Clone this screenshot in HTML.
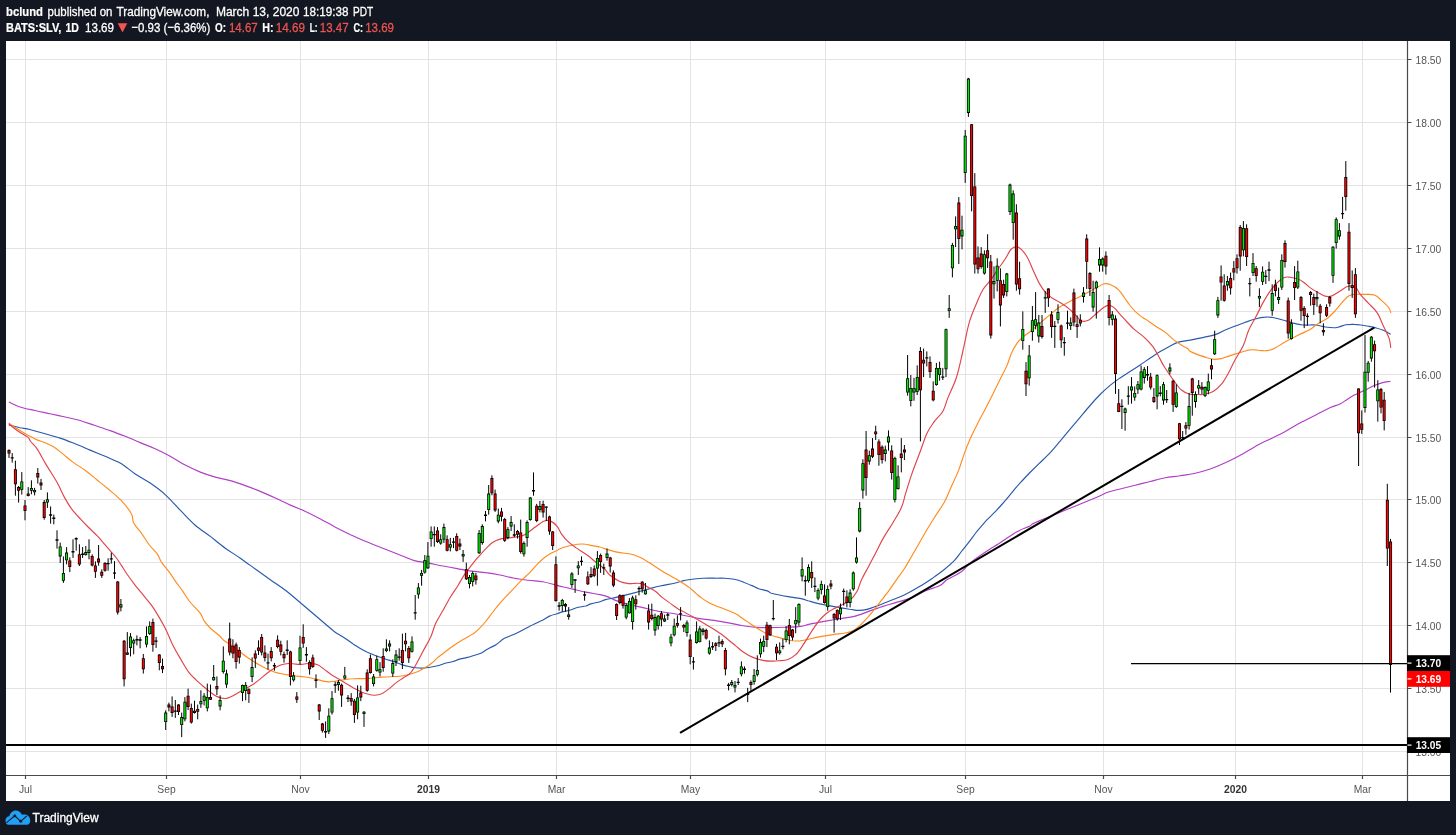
<!DOCTYPE html>
<html><head><meta charset="utf-8"><title>SLV chart</title>
<style>html,body{margin:0;padding:0;background:#131722;overflow:hidden}svg{display:block;will-change:transform}text{font-family:"Liberation Sans",sans-serif}</style></head><body>
<svg width="1456" height="835" viewBox="0 0 1456 835">
<rect width="1456" height="835" fill="#131722"/>
<rect x="6" y="41" width="1444" height="760" fill="#fff"/>
<path d="M25.5 41 V775.5 M166.5 41 V775.5 M300.5 41 V775.5 M428.5 41 V775.5 M556.5 41 V775.5 M690.5 41 V775.5 M825.5 41 V775.5 M965.5 41 V775.5 M1103.5 41 V775.5 M1235.5 41 V775.5 M1362.5 41 V775.5 M6 59.5 H1407.5 M6 122.5 H1407.5 M6 185.5 H1407.5 M6 248.5 H1407.5 M6 311.5 H1407.5 M6 374.5 H1407.5 M6 437.5 H1407.5 M6 499.5 H1407.5 M6 562.5 H1407.5 M6 625.5 H1407.5 M6 688.5 H1407.5 M6 751.5 H1407.5" stroke="#e3e3e3" stroke-width="1" fill="none"/>
<clipPath id="c"><rect x="6" y="41" width="1401.5" height="734.5"/></clipPath>
<g clip-path="url(#c)">
<path d="M8.8 402.0C10.6 402.8 15.6 405.6 20.0 407.0C24.4 408.4 30.0 409.4 35.0 410.5C40.1 411.7 45.1 412.7 50.1 413.8C55.1 414.9 60.1 415.9 65.1 417.0C70.1 418.2 75.1 419.1 80.1 420.5C85.1 422.0 90.1 423.9 95.1 425.5C100.1 427.2 105.1 428.8 110.1 430.6C115.1 432.3 120.2 434.3 125.2 436.3C130.2 438.3 135.2 440.5 140.2 442.6C145.2 444.7 150.2 446.5 155.2 448.8C160.2 451.1 165.2 453.6 170.2 456.3C175.2 459.0 180.2 462.5 185.2 465.1C190.2 467.7 195.2 470.1 200.3 472.1C205.3 474.1 210.3 475.7 215.3 477.1C220.3 478.5 225.3 479.2 230.3 480.6C235.3 482.0 240.3 483.8 245.3 485.6C250.3 487.4 255.3 489.3 260.3 491.4C265.3 493.5 270.3 495.8 275.3 498.1C280.4 500.4 285.4 502.9 290.4 505.1C295.4 507.4 300.4 509.1 305.4 511.4C310.4 513.7 315.4 516.3 320.4 518.9C325.4 521.5 330.4 524.5 335.4 527.2C340.4 529.8 345.7 532.4 350.4 534.7C355.2 536.9 355.7 537.3 364.0 540.7C372.2 544.1 392.8 552.1 400.0 555.0C407.2 557.9 404.8 556.9 407.1 557.9C409.5 558.8 410.7 559.7 414.3 560.6C417.9 561.5 423.8 562.2 428.6 563.1C433.3 564.0 438.1 565.1 442.9 566.0C447.6 566.9 452.4 567.7 457.1 568.6C461.9 569.4 466.7 570.5 471.4 571.1C476.2 571.8 481.0 571.9 485.7 572.6C490.5 573.2 495.2 574.0 500.0 575.0C504.8 576.0 509.5 577.4 514.3 578.3C519.0 579.2 523.8 579.7 528.6 580.3C533.3 580.9 538.1 580.9 542.9 581.7C547.6 582.6 552.4 584.2 557.1 585.4C561.9 586.6 566.7 587.7 571.4 588.9C576.2 590.0 581.0 591.2 585.7 592.1C590.5 593.1 596.3 593.8 600.0 594.6C603.7 595.4 605.6 596.0 608.0 596.9C610.4 597.8 610.9 598.7 614.3 599.9C617.7 601.2 623.8 603.0 628.6 604.3C633.3 605.6 638.1 606.5 642.9 607.6C647.6 608.7 652.4 610.0 657.1 611.0C661.9 612.0 666.7 612.5 671.4 613.3C676.2 614.1 681.0 614.8 685.7 615.7C690.5 616.6 695.2 617.8 700.0 618.6C704.8 619.4 709.5 619.7 714.3 620.4C719.0 621.1 723.8 622.0 728.6 622.9C733.3 623.7 738.1 625.0 742.9 625.7C747.6 626.5 752.4 627.1 757.1 627.4C761.9 627.7 766.7 627.6 771.4 627.6C776.2 627.5 780.8 627.5 785.7 627.3C790.6 627.1 796.7 627.0 800.7 626.4C804.7 625.9 805.5 625.0 809.7 624.1C813.9 623.3 820.7 622.1 825.7 621.1C830.8 620.2 835.2 619.4 840.0 618.6C844.8 617.8 849.5 617.6 854.3 616.4C859.0 615.2 863.8 613.1 868.6 611.4C873.3 609.8 878.1 608.0 882.9 606.4C887.6 604.9 892.4 603.6 897.1 602.1C901.9 600.7 906.7 599.8 911.4 597.9C916.2 596.0 921.0 592.8 925.7 590.7C930.5 588.7 936.4 587.4 940.0 585.5C943.6 583.7 943.6 581.9 947.1 579.6C950.7 577.4 957.9 574.3 961.4 571.8C965.0 569.3 966.2 566.6 968.6 564.5C971.0 562.3 973.3 560.5 975.7 558.8C978.1 557.0 980.5 555.4 982.9 553.8C985.2 552.1 987.3 550.8 990.0 549.1C992.7 547.4 995.9 545.6 999.0 543.6C1002.1 541.5 1005.3 539.1 1008.6 537.0C1011.8 534.9 1015.0 532.7 1018.6 530.9C1022.1 529.0 1026.8 527.5 1030.0 525.9C1033.2 524.3 1027.4 526.0 1038.0 521.4C1048.6 516.9 1082.2 503.4 1093.8 498.5C1105.4 493.6 1103.2 493.8 1107.6 492.3C1112.0 490.7 1115.5 490.2 1120.1 489.0C1124.7 487.8 1130.1 486.5 1135.1 485.2C1140.2 484.0 1145.2 482.7 1150.2 481.5C1155.2 480.2 1160.2 478.7 1165.2 477.7C1170.2 476.8 1175.2 476.5 1180.2 475.7C1185.2 475.0 1190.2 474.4 1195.2 473.2C1200.2 472.1 1205.2 470.7 1210.2 469.0C1215.2 467.2 1220.3 465.0 1225.3 462.7C1230.3 460.4 1235.3 457.9 1240.3 455.2C1245.3 452.5 1250.3 449.2 1255.3 446.4C1260.3 443.7 1265.3 441.4 1270.3 438.9C1275.3 436.4 1280.3 434.1 1285.3 431.4C1290.3 428.7 1295.3 425.4 1300.4 422.7C1305.4 420.0 1310.4 417.7 1315.4 415.2C1320.4 412.7 1326.3 409.5 1330.4 407.6C1334.5 405.8 1337.2 405.4 1340.0 404.0C1342.8 402.7 1344.7 400.9 1347.1 399.4C1349.5 397.9 1351.9 396.4 1354.2 395.1C1356.6 393.9 1359.0 392.9 1361.4 391.7C1363.7 390.6 1366.1 389.5 1368.5 388.4C1370.9 387.2 1373.2 386.0 1375.6 385.0C1378.0 384.1 1380.2 383.3 1382.7 382.6C1385.2 382.0 1389.3 381.5 1390.6 381.2" stroke="#b03fc6" stroke-width="1.15" fill="none" stroke-linejoin="round"/>
<path d="M8.8 425.0C10.6 425.5 16.5 426.9 20.0 427.7C23.6 428.4 25.9 428.5 30.0 429.5C34.2 430.6 40.1 432.4 45.1 433.8C50.1 435.2 55.1 436.4 60.1 438.1C65.1 439.7 70.1 441.8 75.1 443.8C80.1 445.8 85.1 448.0 90.1 450.1C95.1 452.2 100.1 454.2 105.1 456.3C110.1 458.5 115.1 460.2 120.2 463.1C125.2 466.0 130.2 470.5 135.2 473.9C140.2 477.2 145.2 479.7 150.2 483.1C155.2 486.6 160.2 490.1 165.2 494.6C170.2 499.1 175.2 505.1 180.2 510.2C185.2 515.2 190.2 520.8 195.2 525.2C200.3 529.5 205.3 532.6 210.3 536.4C215.3 540.3 220.3 544.6 225.3 548.2C230.3 551.8 235.3 554.7 240.3 558.2C245.3 561.7 250.3 565.4 255.3 569.0C260.3 572.6 265.3 576.2 270.3 579.7C275.3 583.3 281.2 587.1 285.4 590.3C289.5 593.4 287.5 591.9 295.4 598.5C303.2 605.1 325.2 624.0 332.4 630.0C339.7 636.0 336.6 632.9 338.9 634.4C341.1 635.9 343.6 637.4 346.0 639.0C348.4 640.6 350.8 642.3 353.1 643.9C355.5 645.4 357.9 647.0 360.3 648.4C362.7 649.8 365.0 651.1 367.4 652.3C369.8 653.4 372.2 654.4 374.6 655.3C377.0 656.2 379.3 657.0 381.7 657.8C384.1 658.6 386.5 659.3 388.9 660.1C391.2 660.9 393.9 661.7 396.0 662.4C398.1 663.2 399.5 663.9 401.6 664.6C403.7 665.3 406.3 666.0 408.7 666.5C411.1 667.1 413.2 667.6 415.9 667.8C418.5 668.1 422.2 668.1 424.6 668.0C427.0 667.9 427.8 667.6 430.1 667.2C432.5 666.8 436.5 666.1 438.9 665.5C441.2 664.9 442.0 664.2 444.4 663.5C446.8 662.8 450.8 662.2 453.1 661.5C455.5 660.8 456.3 660.1 458.7 659.4C461.1 658.7 465.0 658.1 467.4 657.4C469.8 656.8 470.8 656.4 473.0 655.7C475.2 655.0 478.5 654.4 480.9 653.3C483.2 652.2 484.8 650.6 487.3 649.2C489.8 647.7 493.9 646.0 496.0 644.7C498.1 643.5 498.7 642.7 500.0 641.6C501.3 640.6 501.6 639.6 504.0 638.4C506.4 637.2 510.2 636.2 514.3 634.3C518.4 632.4 523.8 629.2 528.6 626.9C533.3 624.5 539.3 621.9 542.9 620.1C546.4 618.2 547.6 616.9 550.0 615.9C552.4 614.8 555.1 614.3 557.1 613.7C559.2 613.0 559.8 612.6 562.1 611.9C564.5 611.3 569.0 610.5 571.4 609.8C573.8 609.1 574.0 608.4 576.4 607.8C578.8 607.1 583.3 606.6 585.7 606.0C588.1 605.3 588.3 604.6 590.7 603.9C593.1 603.2 597.5 602.4 600.0 601.7C602.5 601.0 602.6 600.4 605.4 599.6C608.3 598.9 612.8 598.2 617.1 597.1C621.5 596.1 626.7 594.8 631.4 593.6C636.2 592.3 641.0 591.0 645.7 589.7C650.5 588.5 655.2 587.1 660.0 586.0C664.8 584.9 670.7 584.0 674.3 583.2C677.9 582.4 679.0 581.8 681.4 581.2C683.8 580.6 685.0 580.2 688.6 579.7C692.1 579.2 698.1 578.5 702.9 578.3C707.6 578.0 713.5 578.2 717.1 578.2C720.8 578.2 721.8 578.0 724.6 578.2C727.5 578.4 731.2 578.7 734.3 579.3C737.3 579.9 740.0 580.9 742.9 581.9C745.7 583.0 748.8 584.2 751.4 585.4C754.0 586.5 755.8 587.7 758.6 588.7C761.3 589.6 765.9 590.3 768.0 591.1C770.1 591.8 768.1 592.2 771.4 593.2C774.7 594.1 782.7 595.7 787.9 596.6C793.0 597.6 798.8 598.2 802.1 598.9C805.5 599.6 805.3 600.0 808.0 600.8C810.7 601.5 814.4 602.6 818.6 603.6C822.7 604.5 827.6 605.5 832.9 606.4C838.1 607.4 845.7 608.6 850.0 609.3C854.3 609.9 855.7 610.4 858.6 610.4C861.4 610.4 864.3 610.1 867.1 609.4C870.0 608.7 871.9 607.9 875.7 606.4C879.5 605.0 885.2 602.6 890.0 600.7C894.8 598.8 899.5 597.3 904.3 595.0C909.0 592.7 913.8 590.0 918.6 587.1C923.3 584.3 928.6 580.8 932.9 577.9C937.1 574.9 940.7 572.3 944.3 569.5C947.9 566.6 951.4 563.7 954.3 560.7C957.1 557.7 958.9 554.7 961.4 551.5C963.9 548.3 966.9 544.7 969.3 541.6C971.7 538.5 973.7 535.5 975.7 533.0C977.7 530.4 979.5 528.3 981.4 526.1C983.3 523.9 985.0 521.9 987.1 519.6C989.3 517.4 991.9 515.1 994.3 512.7C996.7 510.2 999.0 507.7 1001.4 505.0C1003.8 502.3 1006.2 499.5 1008.6 496.6C1011.0 493.8 1013.3 490.6 1015.7 487.9C1018.1 485.1 1020.5 482.6 1022.9 480.0C1025.2 477.4 1027.3 475.3 1030.0 472.5C1032.7 469.8 1035.7 466.9 1039.0 463.6C1042.4 460.3 1046.5 456.6 1050.0 452.8C1053.5 449.1 1056.7 445.1 1060.1 441.1C1063.4 437.2 1066.7 433.2 1070.1 429.2C1073.4 425.3 1076.7 421.3 1080.1 417.3C1083.4 413.4 1086.8 409.3 1090.1 405.5C1093.4 401.6 1096.8 397.8 1100.1 394.5C1103.4 391.2 1106.8 388.2 1110.1 385.4C1113.5 382.7 1116.8 380.3 1120.1 377.9C1123.5 375.6 1126.8 373.5 1130.1 371.4C1133.5 369.2 1136.8 367.1 1140.2 364.9C1143.5 362.7 1146.8 360.4 1150.2 358.1C1153.5 355.9 1156.8 353.6 1160.2 351.6C1163.5 349.6 1167.3 347.7 1170.2 346.1C1173.1 344.6 1174.4 343.5 1177.7 342.4C1181.0 341.4 1186.0 340.9 1190.2 340.1C1194.4 339.2 1198.6 338.5 1202.7 337.6C1206.9 336.6 1211.5 335.8 1215.2 334.6C1219.0 333.3 1221.9 331.4 1225.3 330.0C1228.6 328.6 1231.9 327.3 1235.3 326.0C1238.6 324.8 1241.9 323.5 1245.3 322.3C1248.6 321.1 1252.0 319.8 1255.3 319.0C1258.6 318.1 1262.4 317.3 1265.3 317.1C1268.2 316.8 1269.9 317.0 1272.8 317.5C1275.7 318.0 1279.5 319.0 1282.8 320.0C1286.2 320.9 1289.5 322.2 1292.8 323.0C1296.2 323.9 1299.1 324.7 1302.9 325.0C1306.6 325.4 1311.6 324.7 1315.4 325.0C1319.1 325.4 1322.0 326.6 1325.4 327.0C1328.7 327.5 1333.0 327.8 1335.4 327.7C1337.8 327.6 1338.3 327.1 1340.0 326.6C1341.7 326.2 1343.3 325.2 1345.7 324.8C1348.1 324.5 1351.4 324.3 1354.2 324.4C1357.1 324.4 1360.4 325.0 1362.8 325.3C1365.2 325.6 1366.6 325.9 1368.5 326.3C1370.4 326.6 1371.8 326.8 1374.2 327.4C1376.6 328.1 1380.0 328.9 1382.7 330.0C1385.5 331.2 1389.3 333.5 1390.6 334.2" stroke="#2859ad" stroke-width="1.15" fill="none" stroke-linejoin="round"/>
<path d="M8.8 423.0C10.2 424.0 14.4 427.1 17.5 429.0C20.7 431.0 24.4 433.2 27.5 435.0C30.7 436.7 33.4 438.3 36.4 439.6C39.5 440.9 42.7 441.7 45.7 443.0C48.7 444.3 51.4 445.5 54.3 447.3C57.1 449.1 59.8 451.5 62.9 453.9C66.0 456.4 69.0 459.3 72.9 462.1C76.7 464.9 81.7 467.7 85.7 470.7C89.8 473.7 93.3 476.9 97.1 480.0C101.0 483.1 104.5 485.8 108.6 489.3C112.6 492.7 117.6 496.6 121.4 500.7C125.2 504.8 129.4 510.1 131.4 513.8C133.5 517.4 131.9 519.4 133.6 522.7C135.2 525.9 138.8 529.4 141.4 533.1C144.0 536.8 146.6 541.4 149.3 545.0C152.0 548.5 155.5 551.4 157.5 554.3C159.5 557.2 159.6 559.3 161.4 562.1C163.3 564.9 166.2 568.0 168.6 571.2C171.0 574.5 173.3 578.2 175.7 581.6C178.1 585.0 180.5 588.0 182.9 591.4C185.2 594.8 187.1 598.4 190.0 602.0C192.9 605.5 197.6 609.7 200.0 612.9C202.4 616.0 202.5 618.5 204.3 621.1C206.1 623.7 208.2 626.0 210.7 628.5C213.3 630.9 217.3 633.7 219.5 635.7C221.8 637.8 222.3 639.2 224.3 640.8C226.3 642.4 229.0 643.7 231.4 645.4C233.8 647.0 236.2 648.9 238.6 650.7C241.0 652.5 243.3 654.5 245.7 656.2C248.1 657.9 250.5 659.5 252.9 661.0C255.2 662.6 257.6 664.0 260.0 665.3C262.4 666.7 264.8 667.9 267.1 669.0C269.5 670.1 271.9 671.2 274.3 672.0C276.7 672.8 279.0 673.3 281.4 673.8C283.8 674.3 285.9 674.6 288.6 675.0C291.2 675.4 294.7 675.8 297.2 676.1C299.8 676.4 301.6 676.5 303.7 676.8C305.9 677.1 307.8 677.4 310.1 677.8C312.5 678.3 315.3 679.0 317.7 679.6C320.1 680.2 322.5 681.1 324.6 681.4C326.7 681.8 327.9 681.9 330.3 681.8C332.7 681.7 336.2 681.0 338.9 680.6C341.5 680.2 343.6 679.7 346.0 679.4C348.4 679.0 349.6 678.9 353.1 678.8C356.7 678.6 362.7 678.8 367.4 678.6C372.2 678.3 377.0 677.5 381.7 677.1C386.5 676.8 392.4 676.7 396.0 676.5C399.6 676.3 400.8 676.1 403.1 675.7C405.5 675.3 407.9 674.8 410.3 674.2C412.7 673.5 415.1 672.8 417.4 671.8C419.8 670.8 422.0 669.6 424.4 668.1C426.8 666.7 429.6 664.9 431.7 663.2C433.9 661.5 435.2 659.7 437.3 657.9C439.4 656.2 442.0 654.3 444.4 652.5C446.8 650.7 449.2 648.7 451.6 647.0C454.0 645.3 456.3 643.7 458.7 642.2C461.1 640.6 463.5 639.2 465.9 637.9C468.2 636.5 470.9 635.4 473.0 633.9C475.1 632.5 476.6 631.2 478.7 629.1C480.8 627.1 483.4 624.4 485.7 621.5C488.1 618.7 490.5 615.0 492.9 612.0C495.2 608.9 497.6 606.0 500.0 603.2C502.4 600.4 504.8 597.9 507.1 595.4C509.5 592.8 511.9 590.3 514.3 587.8C516.7 585.3 518.8 582.9 521.4 580.4C524.0 577.8 527.4 575.0 530.0 572.3C532.6 569.7 534.8 566.8 537.1 564.4C539.5 562.0 541.9 559.7 544.3 557.8C546.7 555.9 549.3 554.3 551.4 553.1C553.6 551.8 555.7 551.1 557.1 550.4C558.6 549.7 558.2 549.4 560.0 548.7C561.8 548.0 564.9 547.1 567.9 546.3C570.8 545.6 574.6 544.7 577.6 544.3C580.6 543.9 583.5 544.0 585.7 544.2C587.9 544.3 588.3 545.0 590.7 545.4C593.1 545.9 597.5 546.4 600.0 547.0C602.5 547.5 602.6 548.1 605.4 548.9C608.3 549.8 612.8 551.2 617.1 552.1C621.5 553.0 627.9 553.5 631.4 554.3C635.0 555.1 636.2 555.8 638.6 556.8C641.0 557.8 643.3 559.0 645.7 560.4C648.1 561.7 650.5 563.4 652.9 565.0C655.2 566.6 657.6 568.2 660.0 569.8C662.4 571.3 664.8 572.7 667.1 574.1C669.5 575.5 671.9 576.7 674.3 578.1C676.7 579.4 678.9 580.7 681.4 582.3C684.0 583.9 687.1 585.8 689.5 587.6C691.9 589.4 693.7 591.4 695.7 593.1C697.7 594.8 699.3 596.4 701.4 597.9C703.6 599.5 706.2 601.1 708.6 602.4C711.0 603.7 713.1 604.6 715.7 605.7C718.3 606.8 721.0 607.7 724.3 609.0C727.6 610.4 732.6 612.1 735.7 613.8C738.8 615.4 740.5 617.1 742.9 618.7C745.2 620.3 747.6 621.8 750.0 623.4C752.4 625.0 754.8 626.8 757.1 628.3C759.5 629.8 761.9 631.2 764.3 632.4C766.7 633.5 769.0 634.4 771.4 635.2C773.8 636.1 776.2 636.8 778.6 637.4C781.0 638.1 783.3 638.7 785.7 639.3C788.1 639.8 790.5 640.4 792.9 640.7C795.2 640.9 797.5 641.1 800.0 640.9C802.5 640.6 804.9 640.0 808.0 639.4C811.1 638.7 814.4 637.7 818.6 636.9C822.7 636.1 828.6 635.2 832.9 634.6C837.1 634.0 841.2 633.8 844.3 633.3C847.4 632.8 849.3 632.3 851.4 631.4C853.6 630.6 855.0 629.7 857.1 628.0C859.3 626.3 861.7 624.0 864.3 621.2C866.9 618.5 870.0 614.9 872.9 611.4C875.7 607.9 878.6 604.1 881.4 600.4C884.3 596.6 887.4 592.7 890.0 589.1C892.6 585.5 894.8 582.3 897.1 578.9C899.5 575.5 901.9 572.4 904.3 568.8C906.7 565.1 909.0 560.9 911.4 556.8C913.8 552.7 916.2 548.5 918.6 544.3C921.0 540.1 923.1 536.1 925.7 531.7C928.3 527.3 931.2 522.6 934.3 517.7C937.4 512.8 941.4 507.4 944.3 502.2C947.1 497.0 949.0 491.7 951.4 486.4C953.8 481.1 956.4 475.8 958.6 470.4C960.7 464.9 962.3 459.0 964.3 453.6C966.3 448.1 968.5 442.7 970.7 437.6C973.0 432.5 975.4 427.7 977.9 422.9C980.4 418.0 983.2 413.1 985.7 408.3C988.2 403.5 990.5 398.9 992.9 394.1C995.2 389.3 997.6 384.3 1000.0 379.5C1002.4 374.6 1005.2 369.6 1007.1 365.1C1009.1 360.6 1010.0 356.4 1011.7 352.7C1013.3 349.0 1015.3 345.8 1017.1 343.1C1019.0 340.5 1020.7 338.9 1022.9 337.0C1025.0 335.1 1027.6 333.7 1030.0 331.8C1032.4 329.9 1034.8 327.8 1037.1 325.7C1039.5 323.7 1041.9 321.5 1044.3 319.5C1046.7 317.4 1049.0 315.5 1051.4 313.6C1053.8 311.6 1055.8 309.6 1058.6 307.8C1061.3 305.9 1065.1 304.1 1067.9 302.6C1070.6 301.1 1072.6 300.0 1075.0 298.8C1077.4 297.7 1079.7 296.9 1082.1 295.6C1084.6 294.4 1087.0 292.9 1089.7 291.4C1092.5 289.9 1096.1 287.9 1098.6 286.6C1101.0 285.3 1102.3 284.0 1104.3 283.7C1106.3 283.4 1108.3 283.7 1110.7 284.7C1113.1 285.7 1116.3 287.6 1118.6 289.8C1120.8 291.9 1122.4 294.9 1124.3 297.5C1126.2 300.1 1128.1 303.2 1130.0 305.5C1131.9 307.9 1133.8 309.9 1135.7 311.8C1137.6 313.6 1139.3 315.0 1141.4 316.6C1143.6 318.2 1146.2 319.6 1148.6 321.2C1151.0 322.9 1152.9 324.4 1155.7 326.2C1158.5 328.1 1162.6 330.3 1165.6 332.6C1168.6 334.9 1171.0 337.7 1173.8 339.9C1176.6 342.0 1179.8 344.1 1182.1 345.6C1184.5 347.1 1186.5 347.9 1187.9 348.8C1189.2 349.7 1188.5 350.2 1190.0 351.2C1191.5 352.1 1194.3 353.3 1197.1 354.4C1200.0 355.5 1204.3 356.9 1207.1 357.8C1210.0 358.6 1211.9 359.3 1214.3 359.4C1216.7 359.5 1219.3 359.0 1221.4 358.6C1223.6 358.1 1224.8 357.3 1227.1 356.6C1229.5 355.8 1232.9 354.8 1235.7 353.9C1238.6 353.0 1241.9 352.0 1244.3 351.3C1246.7 350.6 1248.1 350.1 1250.0 349.9C1251.9 349.6 1253.8 349.7 1255.7 349.9C1257.6 350.0 1259.3 350.6 1261.4 350.6C1263.6 350.7 1266.2 350.9 1268.6 350.4C1271.0 349.9 1273.3 348.9 1275.7 347.7C1278.1 346.5 1280.5 344.6 1282.9 343.2C1285.2 341.8 1287.5 340.6 1290.0 339.3C1292.5 338.0 1294.7 336.9 1298.0 335.2C1301.3 333.6 1306.8 331.4 1310.0 329.5C1313.2 327.7 1314.3 326.1 1317.1 324.2C1320.0 322.4 1324.0 320.8 1327.1 318.5C1330.2 316.2 1333.1 313.0 1335.7 310.2C1338.3 307.3 1340.7 303.9 1342.9 301.5C1345.0 299.1 1346.7 297.2 1348.6 296.0C1350.5 294.8 1352.1 294.5 1354.3 294.2C1356.4 294.0 1359.3 294.4 1361.4 294.4C1363.6 294.4 1364.9 294.2 1367.1 294.4C1369.4 294.5 1372.6 294.3 1375.0 295.3C1377.4 296.3 1379.1 298.3 1381.4 300.4C1383.8 302.5 1387.4 305.7 1388.9 307.8C1390.5 309.9 1390.4 312.0 1390.7 312.9" stroke="#ff8c1e" stroke-width="1.15" fill="none" stroke-linejoin="round"/>
<path d="M8.8 423.8C10.2 424.9 14.4 428.5 17.5 430.7C20.7 432.9 25.3 435.1 27.5 436.9C29.7 438.7 29.1 439.5 30.7 441.5C32.3 443.5 34.6 445.2 37.1 448.9C39.6 452.7 42.4 458.3 45.7 463.9C49.0 469.5 54.0 477.0 57.1 482.5C60.2 488.0 61.9 492.8 64.3 497.1C66.7 501.5 68.8 504.9 71.4 508.6C74.1 512.2 77.5 515.8 80.4 518.9C83.2 522.1 85.8 524.7 88.6 527.5C91.4 530.3 94.5 533.0 97.1 535.7C99.8 538.5 102.0 541.3 104.3 543.9C106.5 546.5 108.7 549.0 110.7 551.3C112.7 553.6 114.6 555.6 116.4 558.0C118.2 560.3 119.6 562.7 121.4 565.4C123.2 568.1 125.0 571.2 127.1 574.3C129.3 577.4 131.7 580.7 134.3 584.1C136.9 587.5 140.0 591.1 142.9 594.6C145.7 598.2 148.8 601.5 151.4 605.2C154.0 608.8 156.2 612.4 158.6 616.4C161.0 620.4 163.4 624.5 165.7 629.2C168.0 633.8 169.9 639.2 172.5 644.4C175.1 649.6 178.8 655.8 181.4 660.4C184.1 665.0 186.2 668.9 188.6 672.1C191.0 675.3 193.3 677.3 195.7 679.6C198.1 681.9 200.5 683.9 202.9 686.0C205.2 688.0 207.6 690.1 210.0 691.9C212.4 693.6 214.6 695.5 217.1 696.6C219.7 697.7 223.0 698.5 225.4 698.5C227.7 698.5 229.2 697.6 231.4 696.6C233.6 695.6 236.2 693.8 238.6 692.5C241.0 691.2 243.3 689.9 245.7 688.6C248.1 687.2 250.5 686.0 252.9 684.5C255.2 682.9 257.6 681.0 260.0 679.1C262.4 677.2 264.8 675.0 267.1 673.2C269.5 671.4 271.9 669.7 274.3 668.3C276.7 666.9 279.0 665.6 281.4 664.8C283.8 664.0 286.2 663.6 288.6 663.5C291.0 663.4 293.5 664.0 295.9 664.1C298.3 664.3 300.6 664.4 303.0 664.2C305.4 664.1 307.7 663.3 310.1 663.4C312.6 663.5 315.3 663.7 317.7 664.8C320.1 665.8 322.2 667.9 324.6 669.6C326.9 671.3 329.3 673.3 331.7 674.9C334.1 676.4 336.5 677.6 338.9 679.0C341.2 680.5 343.6 681.9 346.0 683.4C348.4 684.8 350.8 686.4 353.1 687.8C355.5 689.1 357.9 690.4 360.3 691.4C362.7 692.4 365.0 693.4 367.4 694.0C369.8 694.6 372.2 695.2 374.6 695.2C377.0 695.1 379.3 694.8 381.7 693.8C384.1 692.7 386.5 690.7 388.9 688.9C391.2 687.1 393.6 684.7 396.0 682.9C398.4 681.0 400.8 679.6 403.1 678.0C405.5 676.4 408.2 675.4 410.3 673.2C412.4 671.0 413.8 668.4 415.9 664.8C418.0 661.1 420.5 656.1 423.0 651.3C425.5 646.6 428.8 641.2 430.9 636.5C433.0 631.8 433.7 627.7 435.7 623.3C437.7 619.0 440.5 614.8 442.9 610.5C445.2 606.3 447.5 601.9 450.0 597.7C452.5 593.6 455.5 589.5 457.9 585.7C460.2 581.9 462.0 578.3 464.3 574.9C466.5 571.5 469.0 568.3 471.4 565.3C473.8 562.2 476.2 559.4 478.6 556.7C481.0 553.9 483.3 551.2 485.7 548.8C488.1 546.3 490.5 543.9 492.9 542.3C495.2 540.7 497.4 539.8 500.0 539.1C502.6 538.4 506.2 538.4 508.6 538.0C511.0 537.7 512.1 537.5 514.3 537.1C516.4 536.8 519.3 536.8 521.4 536.1C523.6 535.4 524.8 534.7 527.1 533.1C529.5 531.6 532.9 528.7 535.7 526.7C538.6 524.7 541.8 521.9 544.3 521.0C546.8 520.0 548.6 520.2 550.7 521.1C552.9 522.0 555.4 524.3 557.1 526.4C558.9 528.5 559.6 531.2 561.4 533.8C563.2 536.3 565.4 539.1 567.9 541.4C570.3 543.8 573.6 546.0 576.2 547.9C578.8 549.7 581.3 551.1 583.6 552.7C585.9 554.2 587.9 555.5 590.0 557.2C592.1 558.9 594.0 560.9 596.4 562.8C598.9 564.8 602.3 566.8 604.6 568.9C606.8 571.0 607.5 573.3 610.0 575.3C612.5 577.3 616.2 579.8 619.3 581.2C622.4 582.6 625.8 583.2 628.6 583.6C631.3 583.9 633.3 583.3 635.7 583.3C638.1 583.3 641.0 583.2 642.9 583.7C644.8 584.3 645.0 585.4 647.1 586.7C649.3 588.0 653.2 589.7 655.7 591.5C658.2 593.3 659.5 595.3 662.1 597.4C664.8 599.5 668.7 602.1 671.4 604.1C674.2 606.1 676.2 607.8 678.6 609.3C681.0 610.7 683.3 611.6 685.7 612.9C688.1 614.1 690.5 615.4 692.9 616.8C695.2 618.1 697.6 619.5 700.0 620.9C702.4 622.3 704.8 623.7 707.1 625.2C709.5 626.6 711.9 628.1 714.3 629.6C716.7 631.2 719.0 632.6 721.4 634.3C723.8 636.0 726.2 638.1 728.6 640.0C731.0 641.9 733.3 643.9 735.7 645.9C738.1 647.8 740.0 649.8 742.9 651.7C745.7 653.6 749.3 655.9 752.9 657.4C756.4 658.9 761.2 660.0 764.3 660.6C767.4 661.2 769.0 661.1 771.4 661.1C773.8 661.2 775.8 661.1 778.6 660.8C781.3 660.5 785.0 660.5 787.9 659.5C790.7 658.5 793.3 656.9 795.7 654.7C798.1 652.6 800.1 649.4 802.1 646.4C804.2 643.5 806.0 640.3 808.0 637.1C810.0 634.0 812.0 630.5 814.3 627.3C816.5 624.1 819.0 620.6 821.4 618.0C823.8 615.4 826.4 613.3 828.6 611.7C830.7 610.1 832.4 609.6 834.3 608.6C836.2 607.6 837.4 607.3 840.0 605.8C842.6 604.4 847.1 602.4 850.0 600.0C852.9 597.6 855.2 594.6 857.1 591.2C859.0 587.9 859.5 584.1 861.4 580.0C863.3 575.9 866.2 571.0 868.6 566.4C871.0 561.9 873.3 557.5 875.7 552.9C878.1 548.3 880.0 543.9 882.9 538.9C885.7 533.8 889.8 527.9 892.9 522.7C896.0 517.5 899.3 512.5 901.4 507.6C903.6 502.7 903.9 499.0 905.7 493.2C907.5 487.5 909.6 480.3 912.1 473.1C914.6 466.0 918.2 456.9 920.7 450.2C923.2 443.5 924.8 437.7 927.1 432.9C929.5 428.0 932.0 424.9 934.6 421.2C937.3 417.6 940.7 415.1 942.9 411.2C945.1 407.4 945.6 403.6 947.9 397.9C950.1 392.3 953.9 385.4 956.4 377.5C959.0 369.6 960.9 359.7 963.0 350.5C965.2 341.3 966.9 330.5 969.3 322.4C971.6 314.3 974.9 307.4 977.1 302.0C979.4 296.5 980.6 293.4 982.9 289.7C985.1 286.1 988.3 283.4 990.7 280.2C993.1 277.0 994.8 273.9 997.1 270.4C999.5 267.0 1002.6 262.9 1005.0 259.3C1007.4 255.7 1009.3 251.0 1011.4 249.0C1013.6 247.0 1015.4 246.0 1017.9 247.1C1020.4 248.3 1023.9 252.0 1026.4 255.8C1028.9 259.6 1030.7 265.1 1032.9 269.7C1035.0 274.3 1037.1 279.6 1039.3 283.4C1041.4 287.2 1043.6 290.2 1045.7 292.7C1047.9 295.1 1049.8 296.4 1052.1 298.0C1054.5 299.6 1057.1 300.6 1059.6 302.2C1062.1 303.7 1064.6 305.2 1067.1 307.3C1069.7 309.3 1072.7 312.2 1075.0 314.4C1077.3 316.7 1078.7 319.8 1081.0 320.7C1083.2 321.7 1085.7 321.5 1088.3 320.3C1090.9 319.1 1093.8 315.7 1096.4 313.5C1099.1 311.3 1102.1 308.5 1104.3 307.1C1106.4 305.8 1107.6 305.1 1109.3 305.2C1111.0 305.3 1112.5 306.3 1114.3 307.9C1116.1 309.4 1117.9 311.9 1120.0 314.3C1122.1 316.6 1124.8 319.4 1127.1 322.0C1129.5 324.5 1131.4 326.8 1134.3 329.4C1137.1 332.0 1141.2 334.5 1144.3 337.4C1147.4 340.3 1150.5 343.6 1152.9 346.7C1155.2 349.9 1156.7 353.0 1158.6 356.3C1160.5 359.7 1161.9 363.0 1164.3 366.8C1166.7 370.6 1170.0 375.5 1172.9 379.3C1175.7 383.2 1178.6 387.6 1181.4 390.0C1184.3 392.5 1187.4 393.5 1190.0 394.2C1192.6 394.9 1194.8 394.5 1197.1 394.5C1199.5 394.5 1201.5 394.8 1204.3 394.3C1207.0 393.8 1210.6 393.1 1213.6 391.3C1216.5 389.5 1219.6 386.4 1222.1 383.4C1224.6 380.3 1226.4 376.7 1228.6 372.8C1230.7 368.9 1232.5 364.6 1235.0 360.0C1237.5 355.4 1241.1 350.2 1243.4 345.2C1245.7 340.3 1246.4 335.3 1248.6 330.4C1250.7 325.5 1254.0 320.4 1256.4 315.8C1258.8 311.2 1260.7 306.9 1262.9 302.9C1265.1 298.9 1267.2 295.2 1269.6 291.8C1272.1 288.5 1275.0 284.9 1277.4 282.5C1279.9 280.1 1282.2 278.3 1284.3 277.5C1286.4 276.6 1287.6 276.9 1290.0 277.2C1292.4 277.6 1296.2 278.4 1298.6 279.3C1301.0 280.2 1302.4 281.4 1304.3 282.8C1306.2 284.2 1307.9 286.0 1310.0 287.6C1312.1 289.1 1314.8 290.8 1317.1 292.1C1319.5 293.5 1321.9 295.2 1324.3 295.9C1326.7 296.5 1328.8 296.9 1331.4 296.1C1334.0 295.3 1337.3 292.7 1340.0 291.1C1342.7 289.5 1345.2 286.9 1347.9 286.3C1350.5 285.7 1353.7 286.0 1355.7 287.4C1357.7 288.7 1357.9 291.5 1360.0 294.2C1362.1 296.9 1365.7 300.3 1368.6 303.4C1371.4 306.5 1374.8 309.0 1377.1 312.6C1379.5 316.1 1380.8 320.3 1382.8 324.7C1384.8 329.0 1387.9 334.8 1389.2 338.6C1390.5 342.5 1390.5 346.3 1390.7 347.9" stroke="#e0444a" stroke-width="1.15" fill="none" stroke-linejoin="round"/>
<path d="M9.0 449.3V457.9M12.2 453.1V462.6M15.4 460.7V495.7M18.6 486.0V502.6M21.8 472.1V494.6M25.0 500.0V520.3M28.2 487.1V496.4M31.4 480.3V494.3M34.6 487.9V495.4M37.8 468.1V483.6M41.0 478.9V490.0M44.2 500.0V519.7M47.4 492.4V507.9M50.6 506.4V523.6M53.8 514.6V524.3M57.0 530.3V548.6M60.2 542.6V562.9M63.4 556.4V582.9M66.6 547.1V564.3M69.8 557.4V572.1M73.0 539.3V557.9M76.2 537.4V550.7M79.4 544.3V566.0M82.6 547.1V557.9M85.8 546.0V555.7M89.0 539.3V559.3M92.2 554.3V566.4M95.4 561.4V577.9M98.6 545.0V565.7M101.8 569.3V577.9M105.0 562.1V571.7M108.1 558.3V570.7M111.3 552.6V563.6M114.5 561.1V578.9M117.7 581.1V614.6M120.9 599.0V611.4M124.1 640.0V686.4M127.3 632.1V655.0M130.5 633.1V656.4M133.7 638.6V654.3M136.9 635.4V645.4M140.1 636.9V648.3M143.3 654.0V673.6M146.5 626.4V647.4M149.7 621.4V635.0M152.9 618.6V651.7M156.1 636.9V647.9M159.3 654.3V670.3M162.5 658.6V673.1M165.7 710.3V730.0M168.9 702.6V711.4M172.1 696.4V716.9M175.3 700.0V717.9M178.5 704.3V715.0M181.7 712.6V737.1M184.9 697.1V721.4M188.1 688.6V710.0M191.3 703.6V723.6M194.5 700.7V713.6M197.7 704.6V719.3M200.9 690.3V707.9M204.1 693.1V705.4M207.3 683.6V711.4M210.5 684.6V700.0M213.7 665.0V680.7M216.9 676.4V695.0M220.1 695.4V710.3M223.3 646.4V673.6M226.5 669.7V687.9M229.7 622.6V655.4M232.9 639.3V658.3M236.1 642.6V668.6M239.3 647.1V663.6M242.5 684.6V701.1M245.7 682.1V700.3M248.9 688.3V702.9M252.1 657.4V682.1M255.3 650.3V667.9M258.5 640.3V655.0M261.7 634.0V655.4M264.9 645.4V661.4M268.0 653.6V669.7M271.2 647.1V661.4M274.4 662.9V670.7M277.6 635.4V648.3M280.8 640.7V655.4M284.0 651.7V662.6M287.2 640.3V655.0M290.4 650.7V685.4M293.6 672.1V681.7M296.8 692.1V702.9M300.0 635.7V664.6M303.2 624.3V647.9M306.4 647.1V661.7M309.6 660.3V674.6M312.8 654.6V667.9M316.0 674.3V687.9M319.2 704.0V720.0M322.4 722.9V732.6M325.6 721.4V737.9M328.8 708.3V734.0M332.0 691.1V714.6M335.2 681.7V692.9M338.4 680.0V690.7M341.6 683.6V706.9M344.8 666.9V679.3M348.0 695.0V702.1M351.2 693.1V705.7M354.4 698.9V722.9M357.6 685.4V719.3M360.8 685.7V701.1M364.0 711.1V726.9M367.2 669.3V691.7M370.4 654.6V673.6M373.6 674.0V686.4M376.8 655.7V671.7M380.0 662.1V676.4M383.2 648.3V671.7M386.4 639.3V652.1M389.6 640.3V651.4M392.8 659.3V676.9M396.0 650.0V666.0M399.2 648.3V660.7M402.4 633.6V669.0M405.6 632.9V651.4M408.8 646.0V662.9M412.0 636.4V652.6M415.2 595.0V619.7M418.4 583.1V598.6M421.6 570.0V585.7M424.8 555.0V573.6M427.9 542.1V569.0M431.1 526.4V546.7M434.3 526.4V546.7M437.5 527.1V542.9M440.7 534.3V544.7M443.9 523.6V542.9M447.1 535.3V551.4M450.3 537.9V551.4M453.5 537.9V548.1M456.7 533.3V551.4M459.9 538.6V550.0M463.1 550.0V561.9M466.3 562.6V580.0M469.5 575.0V588.3M472.7 571.4V586.4M475.9 572.9V584.6M479.1 530.0V553.9M482.3 524.3V544.7M485.5 511.0V521.4M488.7 485.0V514.7M491.9 475.3V495.3M495.1 489.6V511.9M498.3 508.6V523.3M501.5 507.9V521.4M504.7 517.9V541.9M507.9 527.1V539.3M511.1 516.1V531.0M514.3 524.3V537.1M517.5 530.0V538.6M520.7 519.6V553.6M523.9 541.4V556.7M527.1 520.4V546.7M530.3 497.1V520.7M533.5 472.4V495.7M536.7 503.9V522.1M539.9 501.0V512.4M543.1 500.7V517.6M546.3 506.4V521.0M549.5 515.7V534.7M552.7 531.0V550.0M555.9 556.4V601.7M559.1 602.1V610.7M562.3 598.9V611.7M565.5 603.1V611.7M568.7 607.1V619.7M571.9 572.1V587.9M575.1 579.3V592.9M578.3 561.1V575.0M581.5 556.4V565.7M584.6 591.4V600.7M587.8 571.4V585.0M591.0 567.1V577.9M594.2 565.4V577.1M597.4 551.1V585.7M600.6 553.6V572.9M603.8 563.6V575.0M607.0 548.6V560.7M610.2 556.9V572.6M613.4 570.3V587.1M616.6 603.3V620.0M619.8 594.3V604.3M623.0 594.7V608.6M626.2 603.3V619.3M629.4 598.1V613.6M632.6 595.7V629.6M635.8 595.3V609.6M639.0 586.4V595.4M642.2 581.1V592.6M645.4 582.9V594.7M648.6 604.3V629.6M651.8 603.6V620.4M655.0 613.6V635.7M658.2 615.0V629.6M661.4 611.0V626.4M664.6 614.7V621.9M667.8 612.9V620.0M671.0 633.9V646.4M674.2 618.6V636.4M677.4 615.3V627.6M680.6 607.1V620.4M683.8 623.9V632.1M687.0 620.4V636.7M690.2 634.3V664.3M693.4 657.1V669.6M696.6 621.4V643.6M699.8 626.1V642.4M703.0 627.9V635.3M706.2 628.6V639.6M709.4 640.4V654.7M712.6 642.1V650.0M715.8 642.1V651.0M719.0 635.7V647.1M722.2 639.3V647.1M725.4 647.9V675.3M728.6 682.9V690.4M731.8 680.0V686.4M735.0 681.0V692.4M738.2 678.1V685.0M741.4 661.4V676.4M744.5 666.4V673.6M747.7 687.9V702.1M750.9 680.4V690.7M754.1 669.0V684.7M757.3 655.3V676.4M760.5 638.6V657.6M763.7 635.7V652.1M766.9 621.9V647.1M770.1 624.7V636.1M773.3 600.0V620.4M776.5 643.9V660.0M779.7 642.4V654.7M782.9 638.6V649.3M786.1 626.1V642.4M789.3 619.0V644.3M792.5 629.0V640.4M795.7 607.1V633.3M798.9 603.3V625.7M802.1 557.4V581.4M805.3 575.7V595.7M808.5 564.3V582.6M811.7 561.4V587.9M814.9 577.4V592.1M818.1 588.3V600.3M821.3 580.7V594.3M824.5 584.3V603.6M827.7 585.4V610.7M830.9 580.0V589.3M834.1 612.9V632.6M837.3 609.3V620.7M840.5 603.6V620.0M843.7 588.6V605.7M846.9 590.3V607.4M850.1 589.3V607.4M853.3 571.4V590.7M856.5 537.4V563.6M859.7 502.1V532.4M862.9 459.3V498.6M866.1 431.0V495.7M869.3 450.7V464.7M872.5 438.1V458.1M875.7 425.7V440.0M878.9 439.3V465.7M882.1 445.3V463.6M885.3 445.7V461.4M888.5 430.4V450.7M891.7 445.3V479.6M894.9 456.7V502.4M898.1 465.3V489.6M901.3 438.1V472.4M904.4 445.0V460.0M907.6 355.0V395.7M910.8 375.0V406.4M914.0 377.9V400.7M917.2 365.4V395.0M920.4 347.1V441.4M923.6 348.6V377.1M926.8 351.4V366.4M930.0 356.4V377.9M933.2 381.4V401.4M936.4 362.9V385.7M939.6 361.7V380.7M942.8 367.9V380.0M946.0 328.6V377.1M949.2 295.0V317.9M952.4 242.9V277.4M955.6 216.4V247.1M958.8 197.1V264.0M962.0 215.7V249.3M965.2 130.0V182.9M968.4 77.9V116.9M971.6 124.0V211.4M974.8 173.1V273.6M978.0 246.4V273.6M981.2 247.1V268.6M984.4 250.3V274.6M987.6 234.3V267.9M990.8 255.0V338.6M994.0 266.4V298.6M997.2 258.3V291.4M1000.4 268.3V326.4M1003.6 279.7V297.9M1006.8 272.9V296.4M1010.0 183.6V215.0M1013.2 190.3V239.7M1016.4 204.3V290.7M1019.6 261.7V294.6M1022.8 311.4V349.7M1026.0 362.1V396.0M1029.2 345.0V385.7M1032.4 306.0V340.7M1035.6 292.1V329.3M1038.8 315.0V342.6M1042.0 315.0V338.6M1045.2 291.1V312.9M1048.4 288.3V306.9M1051.6 311.1V337.9M1054.8 321.1V347.9M1058.0 304.3V323.6M1061.2 324.6V347.9M1064.3 337.1V355.7M1067.5 310.7V329.3M1070.7 317.4V330.0M1073.9 288.6V326.4M1077.1 315.4V337.9M1080.3 314.3V326.4M1083.5 287.1V302.6M1086.7 234.3V288.9M1089.9 272.1V296.0M1093.1 280.7V311.7M1096.3 280.7V318.6M1099.5 247.4V271.7M1102.7 257.4V271.7M1105.9 251.4V274.6M1109.1 295.0V325.4M1112.3 311.1V325.4M1115.5 315.4V393.9M1118.7 389.0V412.1M1121.9 399.3V429.0M1125.1 407.6V430.7M1128.3 386.1V404.7M1131.5 377.1V403.6M1134.7 386.4V400.7M1137.9 381.0V393.9M1141.1 365.7V390.4M1144.3 367.1V383.6M1147.5 366.1V380.7M1150.7 372.9V389.6M1153.9 388.1V402.9M1157.1 374.3V409.3M1160.3 386.1V396.4M1163.5 381.9V404.7M1166.7 390.0V402.9M1169.9 363.3V374.3M1173.1 380.0V411.9M1176.3 384.3V407.9M1179.5 422.9V445.0M1182.7 431.0V440.0M1185.9 422.1V434.7M1189.1 392.9V429.6M1192.3 377.9V415.7M1195.5 391.4V407.6M1198.7 380.0V393.9M1201.9 382.1V393.9M1205.1 386.4V397.1M1208.3 373.6V394.3M1211.5 359.0V379.3M1214.7 330.7V355.0M1217.9 296.9V317.9M1221.1 265.4V300.7M1224.2 274.3V301.7M1227.4 276.0V290.7M1230.6 272.6V294.6M1233.8 261.1V280.3M1237.0 254.3V273.6M1240.2 225.0V270.7M1243.4 221.1V256.4M1246.6 224.3V266.0M1249.8 277.9V296.4M1253.0 253.1V276.0M1256.2 266.0V281.7M1259.4 288.3V307.1M1262.6 266.4V285.0M1265.8 270.0V284.0M1269.0 261.7V281.1M1272.2 284.3V315.7M1275.4 279.7V296.4M1278.6 287.6V303.9M1281.8 254.3V290.0M1285.0 240.3V267.6M1288.2 297.6V338.6M1291.4 319.3V339.6M1294.6 266.1V300.0M1297.8 260.7V289.0M1301.0 296.1V320.7M1304.2 306.1V328.1M1307.4 313.3V325.7M1310.6 291.0V305.7M1313.8 293.6V315.0M1317.0 291.0V306.7M1320.2 303.9V323.3M1323.4 323.3V335.7M1326.6 304.3V317.1M1329.8 296.1V306.7M1333.0 246.1V282.9M1336.2 217.4V248.6M1339.4 223.1V239.7M1342.6 196.9V218.9M1345.8 161.1V210.7M1349.0 223.1V290.7M1352.2 270.4V297.9M1355.4 268.1V317.9M1358.6 388.4V466.0M1361.8 410.4V433.9M1365.0 334.9V412.6M1368.2 360.9V381.7M1371.4 336.1V361.7M1374.6 340.6V387.6M1377.8 380.2V421.6M1381.0 387.9V413.3M1384.2 391.9V430.4M1387.3 483.8V566.0M1390.5 538.9V692.6" stroke="#000" stroke-width="1" fill="none"/>
<path d="M7.51 450.0h3V453.6h-3zM10.7 457.2h3v1.4h-3zM13.91 469.3h3V484.3h-3zM17.10 487.1h3V490.7h-3zM20.30 481.4h3V489.7h-3zM23.50 505.4h3V511.1h-3zM26.70 493.6h3V496.1h-3zM29.90 487.9h3V490.7h-3zM33.09 490.0h3V492.2h-3zM36.29 473.1h3V477.4h-3zM39.49 482.6h3V485.4h-3zM42.69 502.1h3V517.9h-3zM45.89 499.3h3V502.6h-3zM49.1 514.3h3v1.4h-3zM52.3 517.6h3v1.4h-3zM55.5 539.3h3v1.4h-3zM58.68 546.4h3V556.4h-3zM61.88 572.9h3V580.7h-3zM65.07 552.6h3V560.3h-3zM68.27 560.4h3V567.1h-3zM71.5 551.0h3v1.4h-3zM74.7 538.0h3v1.4h-3zM77.87 554.3h3V564.6h-3zM81.1 553.6h3v1.4h-3zM84.26 552.1h3V555.0h-3zM87.46 549.7h3V552.9h-3zM90.66 556.0h3V565.4h-3zM93.86 565.4h3V571.7h-3zM97.05 558.6h3V562.4h-3zM100.25 571.7h3V575.7h-3zM103.45 562.9h3V570.7h-3zM106.6 562.9h3v1.4h-3zM109.8 558.2h3v1.4h-3zM113.0 572.4h3v1.4h-3zM116.24 581.4h3V612.6h-3zM119.44 604.3h3V607.4h-3zM122.64 640.7h3V679.3h-3zM125.84 652.5h3V654.7h-3zM129.03 636.4h3V647.9h-3zM132.23 640.3h3V643.6h-3zM135.4 639.0h3v1.4h-3zM138.6 639.3h3v1.4h-3zM141.83 658.3h3V669.3h-3zM145.02 636.0h3V644.6h-3zM148.22 626.0h3V634.0h-3zM151.42 622.1h3V645.0h-3zM154.6 640.4h3v1.4h-3zM157.82 654.6h3V662.9h-3zM161.01 666.0h3V669.3h-3zM164.21 712.6h3V722.1h-3zM167.41 704.6h3V707.4h-3zM170.61 706.4h3V712.9h-3zM173.8 710.4h3v1.4h-3zM177.00 704.6h3V712.1h-3zM180.20 717.1h3V725.0h-3zM183.40 701.7h3V719.3h-3zM186.60 695.7h3V707.1h-3zM189.80 707.9h3V722.6h-3zM192.99 710.7h3V712.9h-3zM196.19 708.9h3V711.7h-3zM199.39 701.1h3V704.3h-3zM202.59 695.7h3V700.7h-3zM205.79 696.9h3V708.3h-3zM208.98 696.9h3V699.7h-3zM212.18 677.1h3V680.3h-3zM215.38 686.0h3V689.3h-3zM218.58 700.0h3V706.4h-3zM221.78 660.7h3V672.1h-3zM224.97 673.6h3V684.6h-3zM228.17 638.6h3V652.6h-3zM231.37 645.7h3V653.6h-3zM234.57 644.6h3V662.1h-3zM237.77 650.0h3V657.4h-3zM240.96 685.0h3V693.1h-3zM244.16 685.0h3V691.1h-3zM247.36 689.3h3V694.0h-3zM250.56 667.1h3V677.1h-3zM253.76 653.6h3V658.6h-3zM256.95 647.4h3V650.7h-3zM260.15 636.9h3V652.6h-3zM263.35 652.6h3V657.9h-3zM266.5 662.2h3v1.4h-3zM269.75 651.1h3V658.3h-3zM272.9 665.0h3v1.4h-3zM276.14 639.7h3V647.1h-3zM279.34 644.6h3V651.7h-3zM282.54 654.0h3V658.3h-3zM285.7 649.6h3v1.4h-3zM288.93 651.4h3V677.1h-3zM292.13 675.4h3V680.3h-3zM295.33 696.4h3V699.7h-3zM298.53 647.4h3V661.1h-3zM301.73 636.9h3V643.6h-3zM304.9 654.0h3v1.4h-3zM308.12 662.1h3V669.3h-3zM311.32 657.4h3V667.1h-3zM314.5 679.6h3v1.4h-3zM317.72 704.6h3V711.4h-3zM320.91 723.6h3V730.7h-3zM324.1 731.0h3v1.4h-3zM327.31 715.7h3V731.4h-3zM330.51 698.3h3V712.6h-3zM333.7 684.3h3v1.4h-3zM336.90 682.1h3V685.0h-3zM340.10 684.7h3V695.4h-3zM343.30 675.4h3V678.6h-3zM346.5 697.6h3v1.4h-3zM349.70 697.9h3V701.4h-3zM352.89 700.7h3V715.0h-3zM356.09 697.4h3V712.6h-3zM359.29 692.6h3V697.4h-3zM362.49 711.7h3V714.0h-3zM365.69 672.6h3V690.7h-3zM368.88 658.3h3V673.1h-3zM372.08 676.4h3V684.0h-3zM375.28 659.3h3V670.7h-3zM378.48 669.3h3V672.6h-3zM381.68 656.0h3V667.9h-3zM384.87 648.6h3V651.1h-3zM388.07 643.6h3V646.4h-3zM391.27 663.1h3V673.6h-3zM394.47 654.6h3V662.1h-3zM397.7 656.4h3v1.4h-3zM400.86 650.0h3V662.9h-3zM404.06 640.7h3V644.3h-3zM407.26 647.9h3V658.3h-3zM410.46 641.4h3V651.7h-3zM413.7 612.2h3v1.4h-3zM416.85 587.4h3V594.6h-3zM420.05 572.9h3V575.7h-3zM423.25 560.3h3V572.6h-3zM426.45 555.7h3V568.3h-3zM429.65 531.4h3V539.0h-3zM432.8 533.9h3v1.4h-3zM436.04 530.4h3V541.9h-3zM439.24 539.3h3V543.6h-3zM442.44 527.1h3V539.6h-3zM445.64 539.3h3V550.7h-3zM448.83 544.3h3V547.6h-3zM452.0 541.4h3v1.4h-3zM455.23 536.1h3V550.7h-3zM458.43 543.6h3V546.4h-3zM461.63 553.9h3V556.4h-3zM464.82 569.3h3V579.3h-3zM468.02 576.9h3V584.0h-3zM471.22 572.9h3V582.1h-3zM474.42 575.4h3V580.3h-3zM477.62 532.9h3V553.3h-3zM480.81 526.1h3V542.9h-3zM484.0 514.6h3v1.4h-3zM487.21 493.6h3V510.0h-3zM490.41 478.1h3V493.3h-3zM493.61 493.6h3V510.4h-3zM496.80 514.7h3V521.4h-3zM500.00 511.4h3V516.7h-3zM503.20 519.0h3V540.7h-3zM506.40 529.3h3V537.9h-3zM509.60 522.1h3V526.4h-3zM512.8 534.3h3v1.4h-3zM515.99 531.0h3V534.7h-3zM519.19 532.4h3V551.9h-3zM522.39 542.9h3V554.3h-3zM525.59 522.1h3V537.9h-3zM528.78 497.6h3V520.0h-3zM532.0 490.0h3v1.4h-3zM535.18 505.7h3V521.0h-3zM538.38 506.1h3V510.0h-3zM541.58 503.9h3V512.4h-3zM544.8 506.4h3v1.4h-3zM547.97 516.4h3V531.4h-3zM551.17 531.4h3V546.1h-3zM554.37 564.3h3V601.1h-3zM557.6 605.3h3v1.4h-3zM560.76 600.0h3V606.0h-3zM563.96 604.0h3V606.4h-3zM567.16 614.6h3V617.1h-3zM570.36 573.6h3V585.0h-3zM573.6 579.3h3v1.4h-3zM576.75 565.4h3V568.3h-3zM580.0 560.7h3v1.4h-3zM583.1 594.3h3v1.4h-3zM586.35 576.4h3V584.3h-3zM589.55 574.0h3V576.9h-3zM592.74 568.6h3V575.7h-3zM595.94 557.9h3V568.6h-3zM599.14 555.0h3V562.1h-3zM602.3 567.2h3v1.4h-3zM605.54 553.6h3V557.9h-3zM608.73 557.4h3V566.4h-3zM611.93 572.6h3V585.4h-3zM615.13 603.9h3V616.1h-3zM618.33 595.3h3V602.9h-3zM621.53 595.3h3V605.7h-3zM624.72 605.0h3V617.6h-3zM627.92 601.0h3V613.3h-3zM631.12 597.6h3V622.1h-3zM634.32 599.3h3V604.3h-3zM637.5 587.9h3v1.4h-3zM640.71 581.7h3V589.3h-3zM643.91 590.3h3V594.3h-3zM647.11 610.4h3V622.4h-3zM650.31 614.7h3V619.0h-3zM653.51 617.1h3V630.4h-3zM656.70 615.7h3V626.1h-3zM659.90 613.3h3V619.6h-3zM663.10 618.6h3V621.4h-3zM666.3 614.3h3v1.4h-3zM669.50 636.7h3V643.3h-3zM672.69 625.7h3V635.3h-3zM675.89 622.9h3V625.7h-3zM679.1 613.2h3v1.4h-3zM682.29 625.0h3V627.6h-3zM685.49 622.4h3V632.9h-3zM688.68 639.6h3V657.1h-3zM691.9 661.2h3v1.4h-3zM695.08 631.4h3V642.9h-3zM698.28 628.6h3V642.1h-3zM701.48 629.6h3V631.9h-3zM704.67 630.0h3V638.6h-3zM707.87 647.6h3V653.6h-3zM711.1 646.0h3v1.4h-3zM714.27 643.3h3V646.1h-3zM717.5 642.2h3v1.4h-3zM720.66 641.0h3V644.3h-3zM723.86 650.0h3V669.3h-3zM727.1 684.6h3v1.4h-3zM730.26 682.1h3V685.0h-3zM733.46 685.0h3V687.6h-3zM736.7 681.7h3v1.4h-3zM739.85 666.4h3V674.3h-3zM743.0 668.6h3v1.4h-3zM746.2 693.6h3v1.4h-3zM749.45 682.1h3V685.0h-3zM752.64 675.3h3V681.9h-3zM755.84 670.0h3V674.7h-3zM759.04 642.1h3V654.3h-3zM762.24 641.0h3V646.7h-3zM765.44 624.7h3V640.0h-3zM768.63 625.3h3V635.3h-3zM771.8 617.9h3v1.4h-3zM775.03 646.7h3V653.3h-3zM778.23 650.4h3V653.3h-3zM781.4 645.7h3v1.4h-3zM784.62 630.4h3V640.0h-3zM787.82 625.0h3V636.1h-3zM791.02 629.6h3V637.6h-3zM794.22 620.0h3V624.3h-3zM797.42 603.9h3V622.4h-3zM800.61 569.3h3V576.4h-3zM803.8 580.0h3v1.4h-3zM807.01 567.1h3V581.1h-3zM810.21 572.1h3V578.3h-3zM813.4 585.7h3v1.4h-3zM816.60 590.0h3V598.6h-3zM819.80 584.0h3V590.0h-3zM823.00 595.4h3V603.1h-3zM826.20 588.9h3V607.1h-3zM829.40 583.6h3V586.4h-3zM832.59 614.0h3V618.6h-3zM835.79 610.0h3V619.3h-3zM838.99 607.9h3V614.3h-3zM842.2 590.7h3v1.4h-3zM845.39 596.4h3V602.9h-3zM848.58 592.6h3V602.9h-3zM851.78 572.6h3V589.3h-3zM854.98 557.4h3V562.6h-3zM858.18 507.9h3V531.4h-3zM861.38 463.3h3V490.4h-3zM864.57 449.6h3V478.1h-3zM867.77 455.3h3V461.4h-3zM870.97 448.6h3V456.7h-3zM874.17 431.4h3V434.3h-3zM877.37 441.4h3V455.0h-3zM880.56 446.7h3V460.0h-3zM883.76 449.6h3V453.9h-3zM886.96 436.4h3V442.4h-3zM890.16 450.4h3V472.9h-3zM893.36 457.9h3V500.0h-3zM896.55 476.4h3V489.0h-3zM899.75 453.6h3V457.9h-3zM902.95 449.6h3V452.4h-3zM906.15 378.3h3V392.6h-3zM909.35 387.9h3V401.1h-3zM912.54 388.3h3V392.6h-3zM915.74 376.9h3V391.7h-3zM918.94 351.1h3V390.3h-3zM922.14 359.7h3V363.6h-3zM925.3 357.2h3v1.4h-3zM928.53 362.1h3V372.1h-3zM931.73 390.7h3V400.3h-3zM934.93 367.9h3V385.0h-3zM938.13 367.9h3V375.0h-3zM941.3 376.4h3v1.4h-3zM944.52 329.3h3V369.3h-3zM947.72 308.3h3V311.1h-3zM950.92 245.0h3V268.3h-3zM954.12 226.0h3V229.3h-3zM957.32 202.6h3V238.9h-3zM960.51 229.7h3V236.4h-3zM963.71 135.7h3V173.1h-3zM966.91 78.6h3V112.9h-3zM970.11 124.3h3V196.0h-3zM973.31 186.4h3V264.6h-3zM976.50 257.4h3V269.3h-3zM979.70 253.6h3V267.1h-3zM982.90 254.3h3V273.6h-3zM986.10 250.3h3V258.3h-3zM989.30 261.4h3V335.4h-3zM992.49 281.1h3V284.3h-3zM995.69 265.7h3V280.7h-3zM998.89 280.3h3V305.4h-3zM1002.09 284.0h3V295.4h-3zM1005.29 273.6h3V292.1h-3zM1008.48 184.6h3V212.1h-3zM1011.68 193.6h3V223.1h-3zM1014.88 212.6h3V284.6h-3zM1018.08 278.3h3V289.3h-3zM1021.28 328.9h3V341.1h-3zM1024.47 370.7h3V384.3h-3zM1027.67 355.4h3V378.3h-3zM1030.87 320.3h3V332.1h-3zM1034.07 319.3h3V325.7h-3zM1037.27 322.6h3V336.4h-3zM1040.46 326.0h3V336.9h-3zM1043.7 297.2h3v1.4h-3zM1046.86 288.6h3V298.3h-3zM1050.06 314.6h3V326.9h-3zM1053.3 325.7h3v1.4h-3zM1056.45 312.1h3V319.7h-3zM1059.65 325.4h3V340.3h-3zM1062.8 341.9h3v1.4h-3zM1066.0 322.4h3v1.4h-3zM1069.25 322.6h3V326.0h-3zM1072.44 292.6h3V322.6h-3zM1075.64 324.3h3V327.1h-3zM1078.84 319.7h3V323.6h-3zM1082.04 292.6h3V296.9h-3zM1085.24 238.6h3V261.7h-3zM1088.43 273.1h3V288.9h-3zM1091.63 292.1h3V307.4h-3zM1094.83 281.7h3V288.3h-3zM1098.03 258.9h3V265.4h-3zM1101.23 258.6h3V265.4h-3zM1104.42 255.7h3V266.4h-3zM1107.62 300.0h3V317.9h-3zM1110.82 314.6h3V319.7h-3zM1114.02 318.6h3V373.9h-3zM1117.22 403.3h3V411.9h-3zM1120.4 405.7h3v1.4h-3zM1123.61 408.6h3V412.9h-3zM1126.8 395.4h3v1.4h-3zM1130.01 386.4h3V390.4h-3zM1133.21 392.9h3V397.6h-3zM1136.40 384.3h3V389.6h-3zM1139.60 371.4h3V389.6h-3zM1142.80 369.3h3V377.9h-3zM1146.0 374.0h3v1.4h-3zM1149.20 376.7h3V387.6h-3zM1152.39 397.1h3V401.9h-3zM1155.59 375.3h3V396.4h-3zM1158.8 392.6h3v1.4h-3zM1161.99 384.3h3V400.4h-3zM1165.2 398.9h3v1.4h-3zM1168.38 367.6h3V371.4h-3zM1171.58 380.7h3V404.7h-3zM1174.78 392.4h3V407.1h-3zM1177.98 423.3h3V439.3h-3zM1181.2 436.9h3v1.4h-3zM1184.37 425.3h3V428.6h-3zM1187.57 406.1h3V425.7h-3zM1190.77 378.6h3V392.9h-3zM1193.97 394.3h3V401.9h-3zM1197.17 385.3h3V388.6h-3zM1200.36 386.7h3V389.6h-3zM1203.56 387.1h3V396.1h-3zM1206.76 381.4h3V390.7h-3zM1209.96 365.3h3V369.6h-3zM1213.16 339.3h3V354.3h-3zM1216.35 300.3h3V315.4h-3zM1219.55 276.4h3V282.6h-3zM1222.75 285.4h3V300.7h-3zM1225.95 281.1h3V285.4h-3zM1229.15 277.9h3V288.3h-3zM1232.34 268.3h3V272.6h-3zM1235.54 258.3h3V268.3h-3zM1238.74 227.1h3V256.4h-3zM1241.94 227.9h3V250.3h-3zM1245.14 228.3h3V257.1h-3zM1248.3 282.9h3v1.4h-3zM1251.53 262.9h3V273.1h-3zM1254.73 268.3h3V276.0h-3zM1257.93 296.0h3V298.6h-3zM1261.13 271.7h3V281.7h-3zM1264.3 275.7h3v1.4h-3zM1267.5 269.3h3v1.4h-3zM1270.72 293.1h3V310.7h-3zM1273.92 284.6h3V291.1h-3zM1277.12 297.1h3V300.0h-3zM1280.31 260.0h3V287.6h-3zM1283.51 243.1h3V261.9h-3zM1286.71 300.4h3V333.6h-3zM1289.91 323.3h3V339.0h-3zM1293.11 281.9h3V288.1h-3zM1296.30 271.4h3V287.6h-3zM1299.50 297.1h3V310.7h-3zM1302.70 307.9h3V316.1h-3zM1305.9 315.7h3v1.4h-3zM1309.10 292.1h3V295.0h-3zM1312.29 297.1h3V305.0h-3zM1315.49 297.1h3V299.3h-3zM1318.69 305.7h3V313.3h-3zM1321.89 330.0h3V332.2h-3zM1325.09 307.1h3V315.7h-3zM1328.28 297.1h3V303.6h-3zM1331.48 246.7h3V275.7h-3zM1334.68 219.3h3V243.1h-3zM1337.88 230.3h3V236.4h-3zM1341.1 212.9h3v1.4h-3zM1344.27 177.1h3V197.1h-3zM1347.47 231.7h3V283.9h-3zM1350.67 285.3h3V287.9h-3zM1353.87 274.3h3V314.3h-3zM1357.07 388.4h3V433.2h-3zM1360.26 423.5h3V429.7h-3zM1363.46 371.7h3V407.9h-3zM1366.66 362.7h3V372.7h-3zM1369.86 336.7h3V358.4h-3zM1373.06 344.2h3V351.3h-3zM1376.25 389.4h3V401.2h-3zM1379.45 389.1h3V407.6h-3zM1382.65 399.8h3V421.1h-3zM1385.85 499.8h3V548.6h-3zM1389.05 541.5h3V664.9h-3z" fill="#000"/>
<path d="M8.31 450.8h1.4V452.8h-1.4zM14.71 470.1h1.4V483.5h-1.4zM17.90 487.9h1.4V489.9h-1.4zM24.30 506.2h1.4V510.3h-1.4zM27.50 494.4h1.4V495.3h-1.4zM37.09 473.9h1.4V476.6h-1.4zM40.29 483.4h1.4V484.6h-1.4zM43.49 502.9h1.4V517.1h-1.4zM69.07 561.2h1.4V566.3h-1.4zM78.67 555.1h1.4V563.8h-1.4zM91.46 556.8h1.4V564.6h-1.4zM94.66 566.2h1.4V570.9h-1.4zM97.85 559.4h1.4V561.6h-1.4zM101.05 572.5h1.4V574.9h-1.4zM104.25 563.7h1.4V569.9h-1.4zM117.04 582.2h1.4V611.8h-1.4zM123.44 641.5h1.4V678.5h-1.4zM126.64 653.3h1.4V653.9h-1.4zM142.63 659.1h1.4V668.5h-1.4zM152.22 622.9h1.4V644.2h-1.4zM158.62 655.4h1.4V662.1h-1.4zM161.81 666.8h1.4V668.5h-1.4zM168.21 705.4h1.4V706.6h-1.4zM171.41 707.2h1.4V712.1h-1.4zM177.80 705.4h1.4V711.3h-1.4zM187.40 696.5h1.4V706.3h-1.4zM190.60 708.7h1.4V721.8h-1.4zM193.79 711.5h1.4V712.1h-1.4zM196.99 709.7h1.4V710.9h-1.4zM209.78 697.7h1.4V698.9h-1.4zM216.18 686.8h1.4V688.5h-1.4zM228.97 639.4h1.4V651.8h-1.4zM232.17 646.5h1.4V652.8h-1.4zM235.37 645.4h1.4V661.3h-1.4zM238.57 650.8h1.4V656.6h-1.4zM248.16 690.1h1.4V693.2h-1.4zM254.56 654.4h1.4V657.8h-1.4zM257.75 648.2h1.4V649.9h-1.4zM260.95 637.7h1.4V651.8h-1.4zM264.15 653.4h1.4V657.1h-1.4zM270.55 651.9h1.4V657.5h-1.4zM276.94 640.5h1.4V646.3h-1.4zM280.14 645.4h1.4V650.9h-1.4zM283.34 654.8h1.4V657.5h-1.4zM289.73 652.2h1.4V676.3h-1.4zM296.13 697.2h1.4V698.9h-1.4zM302.53 637.7h1.4V642.8h-1.4zM308.92 662.9h1.4V668.5h-1.4zM312.12 658.2h1.4V666.3h-1.4zM318.52 705.4h1.4V710.6h-1.4zM321.71 724.4h1.4V729.9h-1.4zM340.90 685.5h1.4V694.6h-1.4zM350.50 698.7h1.4V700.6h-1.4zM353.69 701.5h1.4V714.2h-1.4zM360.09 693.4h1.4V696.6h-1.4zM366.49 673.4h1.4V689.9h-1.4zM369.68 659.1h1.4V672.3h-1.4zM382.48 656.8h1.4V667.1h-1.4zM401.66 650.8h1.4V662.1h-1.4zM404.86 641.5h1.4V643.5h-1.4zM408.06 648.7h1.4V657.5h-1.4zM436.84 531.2h1.4V541.1h-1.4zM446.44 540.1h1.4V549.9h-1.4zM456.03 536.9h1.4V549.9h-1.4zM459.23 544.4h1.4V545.6h-1.4zM465.62 570.1h1.4V578.5h-1.4zM475.22 576.2h1.4V579.5h-1.4zM491.21 478.9h1.4V492.5h-1.4zM494.41 494.4h1.4V509.6h-1.4zM500.80 512.2h1.4V515.9h-1.4zM504.00 519.8h1.4V539.9h-1.4zM516.79 531.8h1.4V533.9h-1.4zM519.99 533.2h1.4V551.1h-1.4zM535.98 506.5h1.4V520.2h-1.4zM542.38 504.7h1.4V511.6h-1.4zM548.77 517.2h1.4V530.6h-1.4zM551.97 532.2h1.4V545.3h-1.4zM555.17 565.1h1.4V600.3h-1.4zM564.76 604.8h1.4V605.6h-1.4zM587.15 577.2h1.4V583.5h-1.4zM590.35 574.8h1.4V576.1h-1.4zM593.54 569.4h1.4V574.9h-1.4zM599.94 555.8h1.4V561.3h-1.4zM609.53 558.2h1.4V565.6h-1.4zM612.73 573.4h1.4V584.6h-1.4zM615.93 604.7h1.4V615.3h-1.4zM619.13 596.1h1.4V602.1h-1.4zM622.33 596.1h1.4V604.9h-1.4zM635.12 600.1h1.4V603.5h-1.4zM641.51 582.5h1.4V588.5h-1.4zM647.91 611.2h1.4V621.6h-1.4zM651.11 615.5h1.4V618.2h-1.4zM660.70 614.1h1.4V618.8h-1.4zM676.69 623.7h1.4V624.9h-1.4zM683.09 625.8h1.4V626.8h-1.4zM689.48 640.4h1.4V656.3h-1.4zM705.47 630.8h1.4V637.8h-1.4zM715.07 644.1h1.4V645.3h-1.4zM721.46 641.8h1.4V643.5h-1.4zM724.66 650.8h1.4V668.5h-1.4zM750.25 682.9h1.4V684.2h-1.4zM766.24 625.5h1.4V639.2h-1.4zM769.43 626.1h1.4V634.5h-1.4zM775.83 647.5h1.4V652.5h-1.4zM788.62 625.8h1.4V635.3h-1.4zM791.82 630.4h1.4V636.8h-1.4zM811.01 572.9h1.4V577.5h-1.4zM823.80 596.2h1.4V602.3h-1.4zM830.20 584.4h1.4V585.6h-1.4zM833.39 614.8h1.4V617.8h-1.4zM836.59 610.8h1.4V618.5h-1.4zM846.19 597.2h1.4V602.1h-1.4zM865.37 450.4h1.4V477.3h-1.4zM871.77 449.4h1.4V455.9h-1.4zM874.97 432.2h1.4V433.5h-1.4zM878.17 442.2h1.4V454.2h-1.4zM881.36 447.5h1.4V459.2h-1.4zM890.96 451.2h1.4V472.1h-1.4zM900.55 454.4h1.4V457.1h-1.4zM903.75 450.4h1.4V451.6h-1.4zM919.74 351.9h1.4V389.5h-1.4zM922.94 360.5h1.4V362.8h-1.4zM929.33 362.9h1.4V371.3h-1.4zM932.53 391.5h1.4V399.5h-1.4zM958.12 203.4h1.4V238.1h-1.4zM970.91 125.1h1.4V195.2h-1.4zM974.11 187.2h1.4V263.8h-1.4zM977.30 258.2h1.4V268.5h-1.4zM980.50 254.4h1.4V266.3h-1.4zM986.90 251.1h1.4V257.5h-1.4zM990.10 262.2h1.4V334.6h-1.4zM999.69 281.1h1.4V304.6h-1.4zM1002.89 284.8h1.4V294.6h-1.4zM1015.68 213.4h1.4V283.8h-1.4zM1018.88 279.1h1.4V288.5h-1.4zM1025.27 371.5h1.4V383.5h-1.4zM1041.26 326.8h1.4V336.1h-1.4zM1047.66 289.4h1.4V297.5h-1.4zM1050.86 315.4h1.4V326.1h-1.4zM1060.45 326.2h1.4V339.5h-1.4zM1073.24 293.4h1.4V321.8h-1.4zM1076.44 325.1h1.4V326.3h-1.4zM1079.64 320.5h1.4V322.8h-1.4zM1086.04 239.4h1.4V260.9h-1.4zM1089.23 273.9h1.4V288.1h-1.4zM1105.22 256.5h1.4V265.6h-1.4zM1108.42 300.8h1.4V317.1h-1.4zM1114.82 319.4h1.4V373.1h-1.4zM1118.02 404.1h1.4V411.1h-1.4zM1150.00 377.5h1.4V386.8h-1.4zM1153.19 397.9h1.4V401.1h-1.4zM1172.38 381.5h1.4V403.9h-1.4zM1178.78 424.1h1.4V438.5h-1.4zM1185.17 426.1h1.4V427.8h-1.4zM1191.57 379.4h1.4V392.1h-1.4zM1201.16 387.5h1.4V388.8h-1.4zM1210.76 366.1h1.4V368.8h-1.4zM1220.35 277.2h1.4V281.8h-1.4zM1223.55 286.2h1.4V299.9h-1.4zM1229.95 278.7h1.4V287.5h-1.4zM1233.14 269.1h1.4V271.8h-1.4zM1236.34 259.1h1.4V267.5h-1.4zM1239.54 227.9h1.4V255.6h-1.4zM1245.94 229.1h1.4V256.3h-1.4zM1255.53 269.1h1.4V275.2h-1.4zM1274.72 285.4h1.4V290.3h-1.4zM1284.31 243.9h1.4V261.1h-1.4zM1287.51 301.2h1.4V332.8h-1.4zM1293.91 282.7h1.4V287.3h-1.4zM1300.30 297.9h1.4V309.9h-1.4zM1303.50 308.7h1.4V315.3h-1.4zM1309.90 292.9h1.4V294.2h-1.4zM1313.09 297.9h1.4V304.2h-1.4zM1319.49 306.5h1.4V312.5h-1.4zM1322.69 330.8h1.4V331.4h-1.4zM1325.89 307.9h1.4V314.9h-1.4zM1329.08 297.9h1.4V302.8h-1.4zM1345.07 177.9h1.4V196.3h-1.4zM1348.27 232.5h1.4V283.1h-1.4zM1351.47 286.1h1.4V287.1h-1.4zM1354.67 275.1h1.4V313.5h-1.4zM1357.87 389.2h1.4V432.4h-1.4zM1361.06 424.3h1.4V428.9h-1.4zM1373.86 345.0h1.4V350.5h-1.4zM1380.25 389.9h1.4V406.8h-1.4zM1383.45 400.6h1.4V420.3h-1.4zM1386.65 500.6h1.4V547.8h-1.4zM1389.85 542.3h1.4V664.1h-1.4z" fill="#ff0000"/>
<path d="M21.10 482.2h1.4V488.9h-1.4zM30.70 488.7h1.4V489.9h-1.4zM33.89 490.8h1.4V491.4h-1.4zM46.69 500.1h1.4V501.8h-1.4zM59.48 547.2h1.4V555.6h-1.4zM62.68 573.7h1.4V579.9h-1.4zM65.87 553.4h1.4V559.5h-1.4zM85.06 552.9h1.4V554.2h-1.4zM88.26 550.5h1.4V552.1h-1.4zM120.24 605.1h1.4V606.6h-1.4zM129.83 637.2h1.4V647.1h-1.4zM133.03 641.1h1.4V642.8h-1.4zM145.82 636.8h1.4V643.8h-1.4zM149.02 626.8h1.4V633.2h-1.4zM165.01 713.4h1.4V721.3h-1.4zM181.00 717.9h1.4V724.2h-1.4zM184.20 702.5h1.4V718.5h-1.4zM200.19 701.9h1.4V703.5h-1.4zM203.39 696.5h1.4V699.9h-1.4zM206.59 697.7h1.4V707.5h-1.4zM212.98 677.9h1.4V679.5h-1.4zM219.38 700.8h1.4V705.6h-1.4zM222.58 661.5h1.4V671.3h-1.4zM225.77 674.4h1.4V683.8h-1.4zM241.76 685.8h1.4V692.3h-1.4zM244.96 685.8h1.4V690.3h-1.4zM251.36 667.9h1.4V676.3h-1.4zM292.93 676.2h1.4V679.5h-1.4zM299.33 648.2h1.4V660.3h-1.4zM328.11 716.5h1.4V730.6h-1.4zM331.31 699.1h1.4V711.8h-1.4zM337.70 682.9h1.4V684.2h-1.4zM344.10 676.2h1.4V677.8h-1.4zM356.89 698.2h1.4V711.8h-1.4zM363.29 712.5h1.4V713.2h-1.4zM372.88 677.2h1.4V683.2h-1.4zM376.08 660.1h1.4V669.9h-1.4zM379.28 670.1h1.4V671.8h-1.4zM385.67 649.4h1.4V650.3h-1.4zM388.87 644.4h1.4V645.6h-1.4zM392.07 663.9h1.4V672.8h-1.4zM395.27 655.4h1.4V661.3h-1.4zM411.26 642.2h1.4V650.9h-1.4zM417.65 588.2h1.4V593.8h-1.4zM420.85 573.7h1.4V574.9h-1.4zM424.05 561.1h1.4V571.8h-1.4zM427.25 556.5h1.4V567.5h-1.4zM430.45 532.2h1.4V538.2h-1.4zM440.04 540.1h1.4V542.8h-1.4zM443.24 527.9h1.4V538.8h-1.4zM449.63 545.1h1.4V546.8h-1.4zM462.43 554.7h1.4V555.6h-1.4zM468.82 577.7h1.4V583.2h-1.4zM472.02 573.7h1.4V581.3h-1.4zM478.42 533.7h1.4V552.5h-1.4zM481.61 526.9h1.4V542.1h-1.4zM488.01 494.4h1.4V509.2h-1.4zM497.60 515.5h1.4V520.6h-1.4zM507.20 530.1h1.4V537.1h-1.4zM510.40 522.9h1.4V525.6h-1.4zM523.19 543.7h1.4V553.5h-1.4zM526.39 522.9h1.4V537.1h-1.4zM529.58 498.4h1.4V519.2h-1.4zM539.18 506.9h1.4V509.2h-1.4zM561.56 600.8h1.4V605.2h-1.4zM567.96 615.4h1.4V616.3h-1.4zM571.16 574.4h1.4V584.2h-1.4zM577.55 566.2h1.4V567.5h-1.4zM596.74 558.7h1.4V567.8h-1.4zM606.34 554.4h1.4V557.1h-1.4zM625.52 605.8h1.4V616.8h-1.4zM628.72 601.8h1.4V612.5h-1.4zM631.92 598.4h1.4V621.3h-1.4zM644.71 591.1h1.4V593.5h-1.4zM654.31 617.9h1.4V629.6h-1.4zM657.50 616.5h1.4V625.3h-1.4zM663.90 619.4h1.4V620.6h-1.4zM670.30 637.5h1.4V642.5h-1.4zM673.49 626.5h1.4V634.5h-1.4zM686.29 623.2h1.4V632.1h-1.4zM695.88 632.2h1.4V642.1h-1.4zM699.08 629.4h1.4V641.3h-1.4zM702.28 630.4h1.4V631.1h-1.4zM708.67 648.4h1.4V652.8h-1.4zM731.06 682.9h1.4V684.2h-1.4zM734.26 685.8h1.4V686.8h-1.4zM740.65 667.2h1.4V673.5h-1.4zM753.44 676.1h1.4V681.1h-1.4zM756.64 670.8h1.4V673.9h-1.4zM759.84 642.9h1.4V653.5h-1.4zM763.04 641.8h1.4V645.9h-1.4zM779.03 651.2h1.4V652.5h-1.4zM785.42 631.2h1.4V639.2h-1.4zM795.02 620.8h1.4V623.5h-1.4zM798.22 604.7h1.4V621.6h-1.4zM801.41 570.1h1.4V575.6h-1.4zM807.81 567.9h1.4V580.3h-1.4zM817.40 590.8h1.4V597.8h-1.4zM820.60 584.8h1.4V589.2h-1.4zM827.00 589.7h1.4V606.3h-1.4zM839.79 608.7h1.4V613.5h-1.4zM849.38 593.4h1.4V602.1h-1.4zM852.58 573.4h1.4V588.5h-1.4zM855.78 558.2h1.4V561.8h-1.4zM858.98 508.7h1.4V530.6h-1.4zM862.18 464.1h1.4V489.6h-1.4zM868.57 456.1h1.4V460.6h-1.4zM884.56 450.4h1.4V453.1h-1.4zM887.76 437.2h1.4V441.6h-1.4zM894.16 458.7h1.4V499.2h-1.4zM897.35 477.2h1.4V488.2h-1.4zM906.95 379.1h1.4V391.8h-1.4zM910.15 388.7h1.4V400.3h-1.4zM913.34 389.1h1.4V391.8h-1.4zM916.54 377.7h1.4V390.9h-1.4zM935.73 368.7h1.4V384.2h-1.4zM938.93 368.7h1.4V374.2h-1.4zM945.32 330.1h1.4V368.5h-1.4zM948.52 309.1h1.4V310.3h-1.4zM951.72 245.8h1.4V267.5h-1.4zM954.92 226.8h1.4V228.5h-1.4zM961.31 230.5h1.4V235.6h-1.4zM964.51 136.5h1.4V172.3h-1.4zM967.71 79.4h1.4V112.1h-1.4zM983.70 255.1h1.4V272.8h-1.4zM993.29 281.9h1.4V283.5h-1.4zM996.49 266.5h1.4V279.9h-1.4zM1006.09 274.4h1.4V291.3h-1.4zM1009.28 185.4h1.4V211.3h-1.4zM1012.48 194.4h1.4V222.3h-1.4zM1022.08 329.7h1.4V340.3h-1.4zM1028.47 356.2h1.4V377.5h-1.4zM1031.67 321.1h1.4V331.3h-1.4zM1034.87 320.1h1.4V324.9h-1.4zM1038.07 323.4h1.4V335.6h-1.4zM1057.25 312.9h1.4V318.9h-1.4zM1070.05 323.4h1.4V325.2h-1.4zM1082.84 293.4h1.4V296.1h-1.4zM1092.43 292.9h1.4V306.6h-1.4zM1095.63 282.5h1.4V287.5h-1.4zM1098.83 259.7h1.4V264.6h-1.4zM1102.03 259.4h1.4V264.6h-1.4zM1111.62 315.4h1.4V318.9h-1.4zM1124.41 409.4h1.4V412.1h-1.4zM1130.81 387.2h1.4V389.6h-1.4zM1134.01 393.7h1.4V396.8h-1.4zM1137.20 385.1h1.4V388.8h-1.4zM1140.40 372.2h1.4V388.8h-1.4zM1143.60 370.1h1.4V377.1h-1.4zM1156.39 376.1h1.4V395.6h-1.4zM1162.79 385.1h1.4V399.6h-1.4zM1169.18 368.4h1.4V370.6h-1.4zM1175.58 393.2h1.4V406.3h-1.4zM1188.37 406.9h1.4V424.9h-1.4zM1194.77 395.1h1.4V401.1h-1.4zM1197.97 386.1h1.4V387.8h-1.4zM1204.36 387.9h1.4V395.3h-1.4zM1207.56 382.2h1.4V389.9h-1.4zM1213.96 340.1h1.4V353.5h-1.4zM1217.15 301.1h1.4V314.6h-1.4zM1226.75 281.9h1.4V284.6h-1.4zM1242.74 228.7h1.4V249.5h-1.4zM1252.33 263.7h1.4V272.3h-1.4zM1258.73 296.8h1.4V297.8h-1.4zM1261.93 272.5h1.4V280.9h-1.4zM1271.52 293.9h1.4V309.9h-1.4zM1277.92 297.9h1.4V299.2h-1.4zM1281.11 260.8h1.4V286.8h-1.4zM1290.71 324.1h1.4V338.2h-1.4zM1297.10 272.2h1.4V286.8h-1.4zM1316.29 297.9h1.4V298.5h-1.4zM1332.28 247.5h1.4V274.9h-1.4zM1335.48 220.1h1.4V242.3h-1.4zM1338.68 231.1h1.4V235.6h-1.4zM1364.26 372.5h1.4V407.1h-1.4zM1367.46 363.5h1.4V371.9h-1.4zM1370.66 337.5h1.4V357.6h-1.4zM1377.05 390.2h1.4V400.4h-1.4z" fill="#00ec00"/>
<path d="M680.0 732.9L1374.2 327.6" stroke="#000" stroke-width="2.0" fill="none"/>
<path d="M6 745H1407.5" stroke="#000" stroke-width="2"/>
<path d="M1131 663.5H1407.5" stroke="#000" stroke-width="1.25"/>
</g>
<path d="M1407.5 41V801 M6 775.5H1450" stroke="#4a4a4a" stroke-width="1.2" fill="none"/>
<path d="M1407.5 59.5h4 M1407.5 122.5h4 M1407.5 185.5h4 M1407.5 248.5h4 M1407.5 311.5h4 M1407.5 374.5h4 M1407.5 437.5h4 M1407.5 499.5h4 M1407.5 562.5h4 M1407.5 625.5h4 M1407.5 688.5h4 M1407.5 751.5h4" stroke="#4a4a4a" stroke-width="1.2"/>
<text x="1415.5" y="63.7" font-size="10.3" fill="#555" textLength="25.7" lengthAdjust="spacingAndGlyphs">18.50</text>
<text x="1415.5" y="126.7" font-size="10.3" fill="#555" textLength="25.7" lengthAdjust="spacingAndGlyphs">18.00</text>
<text x="1415.5" y="189.7" font-size="10.3" fill="#555" textLength="25.7" lengthAdjust="spacingAndGlyphs">17.50</text>
<text x="1415.5" y="252.7" font-size="10.3" fill="#555" textLength="25.7" lengthAdjust="spacingAndGlyphs">17.00</text>
<text x="1415.5" y="315.7" font-size="10.3" fill="#555" textLength="25.7" lengthAdjust="spacingAndGlyphs">16.50</text>
<text x="1415.5" y="378.7" font-size="10.3" fill="#555" textLength="25.7" lengthAdjust="spacingAndGlyphs">16.00</text>
<text x="1415.5" y="441.7" font-size="10.3" fill="#555" textLength="25.7" lengthAdjust="spacingAndGlyphs">15.50</text>
<text x="1415.5" y="503.7" font-size="10.3" fill="#555" textLength="25.7" lengthAdjust="spacingAndGlyphs">15.00</text>
<text x="1415.5" y="566.7" font-size="10.3" fill="#555" textLength="25.7" lengthAdjust="spacingAndGlyphs">14.50</text>
<text x="1415.5" y="629.7" font-size="10.3" fill="#555" textLength="25.7" lengthAdjust="spacingAndGlyphs">14.00</text>
<text x="1415.5" y="692.7" font-size="10.3" fill="#555" textLength="25.7" lengthAdjust="spacingAndGlyphs">13.50</text>
<text x="1415.5" y="755.7" font-size="10.3" fill="#555" textLength="25.7" lengthAdjust="spacingAndGlyphs">13.00</text>
<rect x="1407" y="655.2" width="43" height="15.8" fill="#000"/>
<path d="M1407.5 663.1h4" stroke="#fff" stroke-width="1.2"/>
<text x="1415.7" y="666.9" font-size="10.3" font-weight="bold" fill="#fff" textLength="25.5" lengthAdjust="spacingAndGlyphs">13.70</text>
<rect x="1407" y="671.0" width="43" height="15.8" fill="#ff0000"/>
<path d="M1407.5 678.9h4" stroke="#fff" stroke-width="1.2"/>
<text x="1415.7" y="682.7" font-size="10.3" font-weight="bold" fill="#fff" textLength="25.5" lengthAdjust="spacingAndGlyphs">13.69</text>
<rect x="1407" y="737.2" width="43" height="15.8" fill="#000"/>
<path d="M1407.5 745.1h4" stroke="#fff" stroke-width="1.2"/>
<text x="1415.7" y="748.9" font-size="10.3" font-weight="bold" fill="#fff" textLength="25.5" lengthAdjust="spacingAndGlyphs">13.05</text>
<path d="M25.5 775.5v3.6 M166.5 775.5v3.6 M300.5 775.5v3.6 M428.5 775.5v3.6 M556.5 775.5v3.6 M690.5 775.5v3.6 M825.5 775.5v3.6 M965.5 775.5v3.6 M1103.5 775.5v3.6 M1235.5 775.5v3.6 M1362.5 775.5v3.6" stroke="#4a4a4a" stroke-width="1.2"/>
<text x="25.5" y="793" font-size="10.3" text-anchor="middle" fill="#555">Jul</text>
<text x="166.5" y="793" font-size="10.3" text-anchor="middle" fill="#555">Sep</text>
<text x="300.5" y="793" font-size="10.3" text-anchor="middle" fill="#555">Nov</text>
<text x="428.5" y="793" font-size="10.3" text-anchor="middle" fill="#333" font-weight="bold">2019</text>
<text x="556.5" y="793" font-size="10.3" text-anchor="middle" fill="#555">Mar</text>
<text x="690.5" y="793" font-size="10.3" text-anchor="middle" fill="#555">May</text>
<text x="825.5" y="793" font-size="10.3" text-anchor="middle" fill="#555">Jul</text>
<text x="965.5" y="793" font-size="10.3" text-anchor="middle" fill="#555">Sep</text>
<text x="1103.5" y="793" font-size="10.3" text-anchor="middle" fill="#555">Nov</text>
<text x="1235.5" y="793" font-size="10.3" text-anchor="middle" fill="#333" font-weight="bold">2020</text>
<text x="1362.5" y="793" font-size="10.3" text-anchor="middle" fill="#555">Mar</text>
<text x="6.0" y="15.5" font-size="13.7" fill="#ffffff" stroke="#ffffff" stroke-width="0.2" font-weight="bold" textLength="37.0" lengthAdjust="spacingAndGlyphs">bclund</text>
<text x="47.6" y="15.5" font-size="13.7" fill="#ffffff" stroke="#ffffff" stroke-width="0.3" textLength="64.9" lengthAdjust="spacingAndGlyphs">published on</text>
<text x="116.5" y="15.5" font-size="13.7" fill="#ffffff" stroke="#ffffff" stroke-width="0.3" textLength="92.9" lengthAdjust="spacingAndGlyphs">TradingView.com,</text>
<text x="215.9" y="15.5" font-size="13.7" fill="#ffffff" stroke="#ffffff" stroke-width="0.3" textLength="83.6" lengthAdjust="spacingAndGlyphs">March 13, 2020</text>
<text x="303.1" y="15.5" font-size="13.7" fill="#ffffff" stroke="#ffffff" stroke-width="0.3" textLength="45.5" lengthAdjust="spacingAndGlyphs">18:19:38</text>
<text x="352.9" y="15.5" font-size="13.7" fill="#ffffff" stroke="#ffffff" stroke-width="0.3" textLength="20.2" lengthAdjust="spacingAndGlyphs">PDT</text>
<text x="6.0" y="31.5" font-size="13.7" fill="#ffffff" stroke="#ffffff" stroke-width="0.2" font-weight="bold" textLength="55.4" lengthAdjust="spacingAndGlyphs">BATS:SLV,</text>
<text x="65.5" y="31.5" font-size="13.7" fill="#ffffff" stroke="#ffffff" stroke-width="0.2" font-weight="bold" textLength="13.5" lengthAdjust="spacingAndGlyphs">1D</text>
<text x="85.0" y="31.5" font-size="13.7" fill="#ffffff" stroke="#ffffff" stroke-width="0.3" textLength="29.0" lengthAdjust="spacingAndGlyphs">13.69</text>
<path d="M117.7 23.3h9.6l-4.8 9.2z" fill="#f4534f"/>
<text x="131.3" y="31.5" font-size="13.7" fill="#ffffff" stroke="#ffffff" stroke-width="0.3" textLength="79.1" lengthAdjust="spacingAndGlyphs">−0.93 (−6.36%)</text>
<text x="215.0" y="31.5" font-size="13.7" fill="#ffffff" stroke="#ffffff" stroke-width="0.2" font-weight="bold" textLength="11.0" lengthAdjust="spacingAndGlyphs">O:</text>
<text x="228.9" y="31.5" font-size="13.7" fill="#ef5350" stroke="#ef5350" stroke-width="0.3" textLength="28.8" lengthAdjust="spacingAndGlyphs">14.67</text>
<text x="262.3" y="31.5" font-size="13.7" fill="#ffffff" stroke="#ffffff" stroke-width="0.2" font-weight="bold" textLength="11.3" lengthAdjust="spacingAndGlyphs">H:</text>
<text x="275.8" y="31.5" font-size="13.7" fill="#ef5350" stroke="#ef5350" stroke-width="0.3" textLength="29.2" lengthAdjust="spacingAndGlyphs">14.69</text>
<text x="309.7" y="31.5" font-size="13.7" fill="#ffffff" stroke="#ffffff" stroke-width="0.2" font-weight="bold" textLength="7.9" lengthAdjust="spacingAndGlyphs">L:</text>
<text x="319.8" y="31.5" font-size="13.7" fill="#ef5350" stroke="#ef5350" stroke-width="0.3" textLength="28.8" lengthAdjust="spacingAndGlyphs">13.47</text>
<text x="353.4" y="31.5" font-size="13.7" fill="#ffffff" stroke="#ffffff" stroke-width="0.2" font-weight="bold" textLength="9.6" lengthAdjust="spacingAndGlyphs">C:</text>
<text x="365.2" y="31.5" font-size="13.7" fill="#ef5350" stroke="#ef5350" stroke-width="0.3" textLength="28.8" lengthAdjust="spacingAndGlyphs">13.69</text>
<path d="M8.3 824.8C6.5 824.8 5.5 822.6 5.5 820.2C5.5 817.8 7.3 816.3 9.3 816.2C10.3 812.9 12.8 810.6 15.7 810.6C18.6 810.6 20.9 812.4 21.9 814.8C22.9 814.7 24.2 814.5 25.3 814.6C28 814.9 30.2 817.5 30.2 820.4C30.3 822.8 28.8 824.8 27 824.8Z" fill="#22a0f6"/>
<path d="M6.5 822.6L14.8 815.8L20.7 821.3L26.8 815.8" stroke="#131722" stroke-width="1.1" fill="none"/>
<circle cx="14.8" cy="815.9" r="1.45" fill="#131722"/><circle cx="20.7" cy="821.3" r="1.45" fill="#131722"/>
<text x="32.5" y="821.9" font-size="12" fill="#fff" stroke="#fff" stroke-width="0.3" textLength="66.1" lengthAdjust="spacingAndGlyphs">TradingView</text>
</svg></body></html>
